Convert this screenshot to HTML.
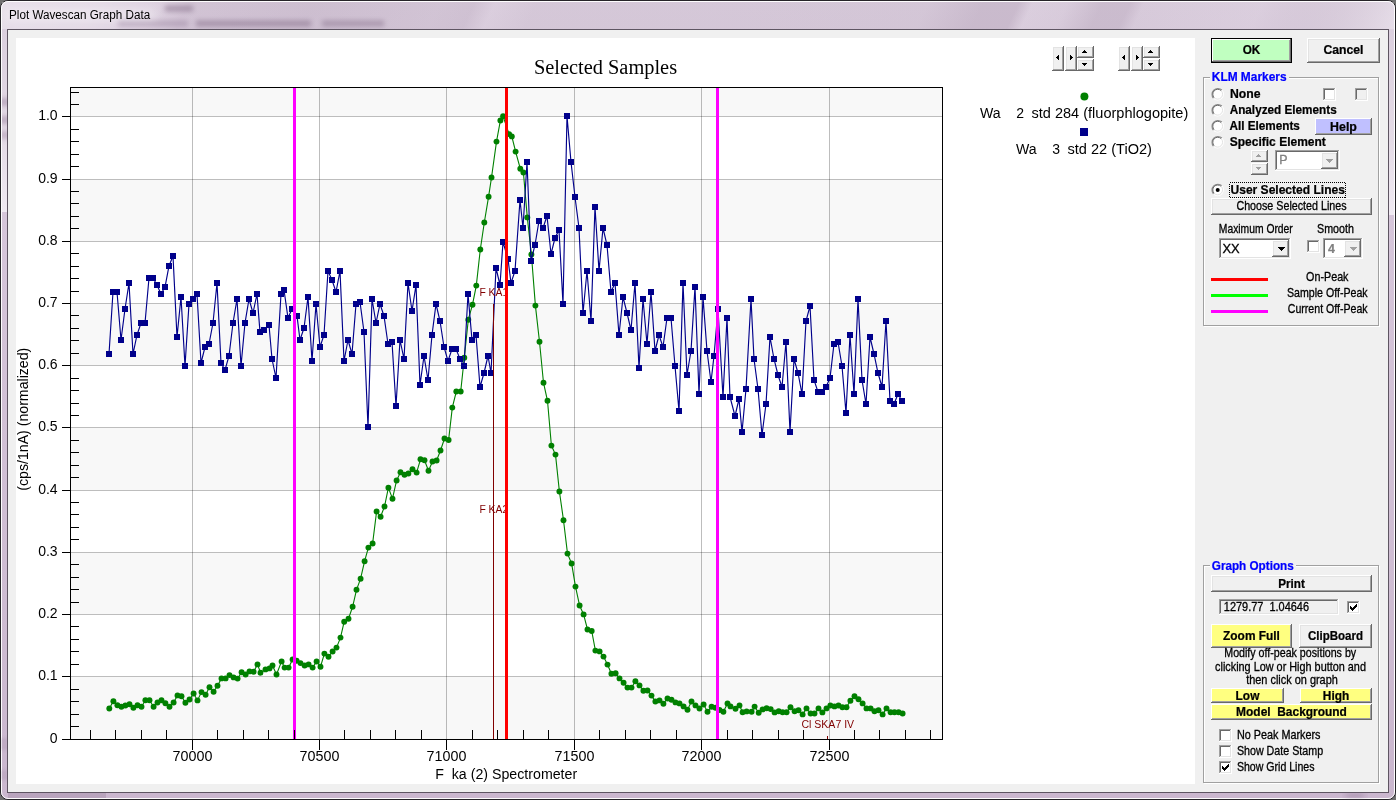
<!DOCTYPE html>
<html><head><meta charset="utf-8"><title>Plot Wavescan Graph Data</title>
<style>
html,body{margin:0;padding:0;background:#6f6f6f;}
body{width:1396px;height:800px;position:relative;overflow:hidden;font-family:"Liberation Sans",sans-serif;}

</style></head><body>
<svg width="1396" height="800" viewBox="0 0 1396 800" style="position:absolute;left:0;top:0" shape-rendering="crispEdges">
<defs>
<linearGradient id="tb" x1="0" y1="0" x2="0" y2="1"><stop offset="0" stop-color="#DDD1E0"/><stop offset="0.3" stop-color="#D6C7DA"/><stop offset="1" stop-color="#CDBAD1"/></linearGradient>
<linearGradient id="tbx" gradientUnits="userSpaceOnUse" x1="0" y1="0" x2="1396" y2="0">
 <stop offset="0" stop-color="#fff" stop-opacity="0.30"/>
 <stop offset="0.065" stop-color="#fff" stop-opacity="0.22"/>
 <stop offset="0.10" stop-color="#fff" stop-opacity="0.05"/>
 <stop offset="0.13" stop-color="#6c4f70" stop-opacity="0.10"/>
 <stop offset="0.22" stop-color="#6c4f70" stop-opacity="0.14"/>
 <stop offset="0.31" stop-color="#6c4f70" stop-opacity="0.10"/>
 <stop offset="0.335" stop-color="#6c4f70" stop-opacity="0.12"/>
 <stop offset="0.35" stop-color="#6c4f70" stop-opacity="0.02"/>
 <stop offset="0.38" stop-color="#6c4f70" stop-opacity="0.07"/>
 <stop offset="0.50" stop-color="#6c4f70" stop-opacity="0.07"/>
 <stop offset="0.66" stop-color="#6c4f70" stop-opacity="0.08"/>
 <stop offset="0.70" stop-color="#6c4f70" stop-opacity="0.17"/>
 <stop offset="0.725" stop-color="#6c4f70" stop-opacity="0.17"/>
 <stop offset="0.735" stop-color="#6c4f70" stop-opacity="0.02"/>
 <stop offset="0.76" stop-color="#6c4f70" stop-opacity="0.04"/>
 <stop offset="0.785" stop-color="#6c4f70" stop-opacity="0.16"/>
 <stop offset="0.805" stop-color="#6c4f70" stop-opacity="0.16"/>
 <stop offset="0.815" stop-color="#6c4f70" stop-opacity="0.05"/>
 <stop offset="0.90" stop-color="#6c4f70" stop-opacity="0.02"/>
 <stop offset="1" stop-color="#fff" stop-opacity="0.25"/></linearGradient>
<linearGradient id="side" gradientUnits="userSpaceOnUse" x1="0" y1="30" x2="0" y2="800"><stop offset="0" stop-color="#D8CADB"/><stop offset="0.24" stop-color="#D6C6DA"/><stop offset="1" stop-color="#CAB7CE"/></linearGradient>
<linearGradient id="sidetop" gradientUnits="userSpaceOnUse" x1="0" y1="30" x2="0" y2="214"><stop offset="0" stop-color="#DBCFDE"/><stop offset="0.6" stop-color="#E4DBE6"/><stop offset="1" stop-color="#F0EAF2"/></linearGradient>
<filter id="blurv" x="-100%" y="-50%" width="300%" height="200%"><feGaussianBlur stdDeviation="0.6 2.5"/></filter>
<filter id="blur3" x="-20%" y="-100%" width="140%" height="300%"><feGaussianBlur stdDeviation="5 3"/></filter>
<filter id="blurg" x="-20%" y="-150%" width="140%" height="400%"><feGaussianBlur stdDeviation="2.5 2"/></filter>
<filter id="blur2" x="-20%" y="-100%" width="140%" height="300%"><feGaussianBlur stdDeviation="3 1.6"/></filter>
<clipPath id="plotclip"><rect x="71" y="88" width="871" height="651"/></clipPath>
</defs>
<rect x="0" y="0" width="1396" height="800" fill="#6f6f6f"/>
<rect x="0.5" y="0.5" width="1395" height="799" rx="7.5" ry="7.5" fill="url(#tb)" stroke="#262428" stroke-width="1" shape-rendering="geometricPrecision"/>
<path d="M2,30 H1394 V792 Q1394,798 1388,798 H8 Q2,798 2,792 Z" fill="url(#side)" shape-rendering="geometricPrecision"/>
<rect x="1389" y="30" width="5" height="185" fill="url(#sidetop)"/>
<rect x="2" y="30" width="5" height="182" fill="url(#sidetop)"/>
<g opacity="0.5" filter="url(#blurv)"><rect x="2" y="98" width="5" height="8" fill="#9c84a0"/><rect x="2" y="116" width="5" height="8" fill="#9c84a0"/><rect x="2" y="131" width="5" height="8" fill="#a890ac"/></g>
<rect x="8" y="793" width="1380" height="5" fill="#CBB7CF"/>
<rect x="8" y="793" width="98" height="5" fill="#B9A4BD"/>
<clipPath id="tbclip"><rect x="2" y="2" width="1392" height="27"/></clipPath>
<g clip-path="url(#tbclip)"><rect x="-40" y="2" width="1480" height="28" fill="url(#tbx)" transform="skewX(-25) translate(8,0)"/></g>
<rect x="1.5" y="1.5" width="1393" height="797" rx="6.5" ry="6.5" fill="none" stroke="#FFFFFF" stroke-opacity="0.95" stroke-width="1" shape-rendering="geometricPrecision"/>
<g filter="url(#blurg)" opacity="0.42"><rect x="165" y="5" width="28" height="7" fill="#7d6581"/><rect x="118" y="20" width="70" height="7" fill="#9b85a0"/><rect x="196" y="20" width="115" height="7" fill="#7d6581"/><rect x="322" y="20" width="62" height="7" fill="#86708a"/></g>
<g opacity="0.45"><rect x="2" y="738" width="5" height="12" fill="#9c84a0" filter="url(#blur2)"/><rect x="2" y="770" width="5" height="10" fill="#9c84a0" filter="url(#blur2)"/><rect x="1346" y="793" width="18" height="5" fill="#9c84a0" filter="url(#blur2)"/></g>
<g filter="url(#blur3)" opacity="0.28"><rect x="6" y="8" width="150" height="14" fill="#fff"/></g>
<g shape-rendering="geometricPrecision">
<text x="9.0" y="19" font-family="Liberation Sans, sans-serif" font-size="12" fill="#000" text-anchor="start" textLength="141.2" lengthAdjust="spacingAndGlyphs" xml:space="preserve" style="white-space:pre" >Plot Wavescan Graph Data</text>
</g>
<rect x="7" y="29" width="1382" height="764" fill="#5E5562" />
<rect x="8" y="30" width="1380" height="762" fill="#F0F0F0" />
<rect x="16" y="38" width="1179" height="746" fill="#FFFFFF" />
<rect x="71" y="88" width="871" height="28" fill="#F8F8F8" />
<rect x="71" y="180" width="871" height="61" fill="#F8F8F8" />
<rect x="71" y="304" width="871" height="61" fill="#F8F8F8" />
<rect x="71" y="428" width="871" height="62" fill="#F8F8F8" />
<rect x="71" y="553" width="871" height="61" fill="#F8F8F8" />
<rect x="71" y="677" width="871" height="62" fill="#F8F8F8" />
<rect x="71" y="116" width="871" height="1" fill="#000" fill-opacity="0.26" />
<rect x="71" y="179" width="871" height="1" fill="#000" fill-opacity="0.26" />
<rect x="71" y="241" width="871" height="1" fill="#000" fill-opacity="0.26" />
<rect x="71" y="303" width="871" height="1" fill="#000" fill-opacity="0.26" />
<rect x="71" y="365" width="871" height="1" fill="#000" fill-opacity="0.26" />
<rect x="71" y="427" width="871" height="1" fill="#000" fill-opacity="0.26" />
<rect x="71" y="490" width="871" height="1" fill="#000" fill-opacity="0.26" />
<rect x="71" y="552" width="871" height="1" fill="#000" fill-opacity="0.26" />
<rect x="71" y="614" width="871" height="1" fill="#000" fill-opacity="0.26" />
<rect x="71" y="676" width="871" height="1" fill="#000" fill-opacity="0.26" />
<rect x="192" y="88" width="1" height="651" fill="#000" fill-opacity="0.26" />
<rect x="319" y="88" width="1" height="651" fill="#000" fill-opacity="0.26" />
<rect x="446" y="88" width="1" height="651" fill="#000" fill-opacity="0.26" />
<rect x="574" y="88" width="1" height="651" fill="#000" fill-opacity="0.26" />
<rect x="701" y="88" width="1" height="651" fill="#000" fill-opacity="0.26" />
<rect x="829" y="88" width="1" height="651" fill="#000" fill-opacity="0.26" />
<g shape-rendering="geometricPrecision" clip-path="url(#plotclip)">
<polyline points="109.3,708.5 113.4,701.2 117.4,705.2 121.4,706.7 125.4,705.5 129.5,704.2 133.4,707.8 137.5,705.2 141.5,706.7 145.4,700.3 149.5,700.3 153.6,706.7 157.5,702.5 161.5,700.3 165.4,703.3 169.5,706.7 173.6,702.5 177.5,695.4 181.5,696.2 185.4,702.7 189.5,699.5 193.6,693.5 197.5,700.4 201.5,692.1 205.6,694.7 209.5,687.2 213.6,691.7 217.5,685.7 221.5,678.4 225.6,678.4 229.5,675.1 233.6,677.4 237.6,678.6 241.6,672.3 245.6,674.5 249.5,671.4 253.6,671.7 257.5,664.4 260.5,672.7 265.5,669.4 269.5,668.4 272.5,665.5 276.5,674.5 281.6,661.4 284.6,667.6 288.6,667.6 292.6,659.5 296.6,660.8 300.5,663.1 304.6,665.5 308.6,664.4 312.6,667.6 316.6,661.5 320.5,666.7 324.4,653.6 328.5,656.7 332.6,651.5 336.5,647.6 340.5,637.6 344.2,621.7 348.5,618.7 352.6,606.8 356.5,589.8 360.6,578.7 364.6,561.2 368.4,547.6 372.6,543.5 376.6,511.5 380.6,516.7 384.5,506.5 388.4,487.7 392.5,498.7 396.6,480.5 400.5,472.3 404.5,474.7 408.4,473.5 412.5,469.3 416.6,472.6 420.5,459.3 424.5,460.3 428.5,470.7 432.5,461.5 436.6,460.5 440.5,450.5 444.5,438.5 448.6,440.0 452.3,407.6 456.3,391.5 460.7,391.5 464.3,357.8 468.3,319.7 472.5,304.7 476.3,285.6 480.3,249.5 484.3,222.5 488.6,196.7 491.5,177.5 496.5,141.6 500.4,120.5 503.1,116.3 509.1,134.1 511.8,136.4 515.6,151.6 520.3,168.7 523.4,172.5 527.3,217.4 531.4,254.5 535.4,305.6 539.5,341.8 543.5,382.7 547.5,400.8 551.4,445.6 555.5,454.6 559.4,491.5 563.5,520.2 567.5,553.6 571.6,563.5 575.5,586.6 579.6,605.5 583.6,614.4 587.5,629.5 591.7,631.0 595.4,650.6 599.6,651.4 603.5,656.6 607.5,664.6 611.4,673.8 615.6,673.3 619.5,678.4 623.6,682.7 627.5,687.6 631.5,687.6 635.4,681.3 639.5,685.4 643.4,690.8 647.5,690.5 651.5,695.6 655.4,701.5 659.5,700.4 663.4,703.7 667.5,698.5 671.5,699.7 675.5,702.4 679.5,703.4 683.6,706.4 687.5,709.7 691.5,701.5 695.5,705.4 699.5,708.5 703.6,704.5 707.5,711.7 711.6,706.7 715.5,707.8 719.5,710.0 723.4,711.8 727.5,703.4 730.5,706.4 735.5,708.7 739.5,705.4 742.6,712.3 746.6,711.4 751.6,711.7 754.6,706.6 758.7,712.7 762.6,709.4 766.6,708.2 770.7,709.1 774.6,712.4 778.7,711.2 782.6,712.3 786.6,712.3 790.5,707.3 794.6,711.2 798.5,710.2 802.6,714.4 806.5,708.4 810.6,713.5 814.5,713.5 818.5,708.4 822.4,712.4 826.5,708.4 830.4,705.5 834.5,706.4 838.5,705.5 842.4,707.3 846.5,707.3 850.4,700.7 854.5,696.2 858.5,699.3 862.6,703.4 866.5,708.4 870.6,708.4 874.5,711.2 878.5,710.3 882.6,714.4 886.5,708.4 890.6,712.3 894.5,712.3 898.6,712.3 902.6,713.5" fill="none" stroke="#008000" stroke-width="1.1"/>
<circle cx="109.3" cy="708.5" r="2.95" fill="#008000"/>
<circle cx="113.4" cy="701.2" r="2.95" fill="#008000"/>
<circle cx="117.4" cy="705.2" r="2.95" fill="#008000"/>
<circle cx="121.4" cy="706.7" r="2.95" fill="#008000"/>
<circle cx="125.4" cy="705.5" r="2.95" fill="#008000"/>
<circle cx="129.5" cy="704.2" r="2.95" fill="#008000"/>
<circle cx="133.4" cy="707.8" r="2.95" fill="#008000"/>
<circle cx="137.5" cy="705.2" r="2.95" fill="#008000"/>
<circle cx="141.5" cy="706.7" r="2.95" fill="#008000"/>
<circle cx="145.4" cy="700.3" r="2.95" fill="#008000"/>
<circle cx="149.5" cy="700.3" r="2.95" fill="#008000"/>
<circle cx="153.6" cy="706.7" r="2.95" fill="#008000"/>
<circle cx="157.5" cy="702.5" r="2.95" fill="#008000"/>
<circle cx="161.5" cy="700.3" r="2.95" fill="#008000"/>
<circle cx="165.4" cy="703.3" r="2.95" fill="#008000"/>
<circle cx="169.5" cy="706.7" r="2.95" fill="#008000"/>
<circle cx="173.6" cy="702.5" r="2.95" fill="#008000"/>
<circle cx="177.5" cy="695.4" r="2.95" fill="#008000"/>
<circle cx="181.5" cy="696.2" r="2.95" fill="#008000"/>
<circle cx="185.4" cy="702.7" r="2.95" fill="#008000"/>
<circle cx="189.5" cy="699.5" r="2.95" fill="#008000"/>
<circle cx="193.6" cy="693.5" r="2.95" fill="#008000"/>
<circle cx="197.5" cy="700.4" r="2.95" fill="#008000"/>
<circle cx="201.5" cy="692.1" r="2.95" fill="#008000"/>
<circle cx="205.6" cy="694.7" r="2.95" fill="#008000"/>
<circle cx="209.5" cy="687.2" r="2.95" fill="#008000"/>
<circle cx="213.6" cy="691.7" r="2.95" fill="#008000"/>
<circle cx="217.5" cy="685.7" r="2.95" fill="#008000"/>
<circle cx="221.5" cy="678.4" r="2.95" fill="#008000"/>
<circle cx="225.6" cy="678.4" r="2.95" fill="#008000"/>
<circle cx="229.5" cy="675.1" r="2.95" fill="#008000"/>
<circle cx="233.6" cy="677.4" r="2.95" fill="#008000"/>
<circle cx="237.6" cy="678.6" r="2.95" fill="#008000"/>
<circle cx="241.6" cy="672.3" r="2.95" fill="#008000"/>
<circle cx="245.6" cy="674.5" r="2.95" fill="#008000"/>
<circle cx="249.5" cy="671.4" r="2.95" fill="#008000"/>
<circle cx="253.6" cy="671.7" r="2.95" fill="#008000"/>
<circle cx="257.5" cy="664.4" r="2.95" fill="#008000"/>
<circle cx="260.5" cy="672.7" r="2.95" fill="#008000"/>
<circle cx="265.5" cy="669.4" r="2.95" fill="#008000"/>
<circle cx="269.5" cy="668.4" r="2.95" fill="#008000"/>
<circle cx="272.5" cy="665.5" r="2.95" fill="#008000"/>
<circle cx="276.5" cy="674.5" r="2.95" fill="#008000"/>
<circle cx="281.6" cy="661.4" r="2.95" fill="#008000"/>
<circle cx="284.6" cy="667.6" r="2.95" fill="#008000"/>
<circle cx="288.6" cy="667.6" r="2.95" fill="#008000"/>
<circle cx="292.6" cy="659.5" r="2.95" fill="#008000"/>
<circle cx="296.6" cy="660.8" r="2.95" fill="#008000"/>
<circle cx="300.5" cy="663.1" r="2.95" fill="#008000"/>
<circle cx="304.6" cy="665.5" r="2.95" fill="#008000"/>
<circle cx="308.6" cy="664.4" r="2.95" fill="#008000"/>
<circle cx="312.6" cy="667.6" r="2.95" fill="#008000"/>
<circle cx="316.6" cy="661.5" r="2.95" fill="#008000"/>
<circle cx="320.5" cy="666.7" r="2.95" fill="#008000"/>
<circle cx="324.4" cy="653.6" r="2.95" fill="#008000"/>
<circle cx="328.5" cy="656.7" r="2.95" fill="#008000"/>
<circle cx="332.6" cy="651.5" r="2.95" fill="#008000"/>
<circle cx="336.5" cy="647.6" r="2.95" fill="#008000"/>
<circle cx="340.5" cy="637.6" r="2.95" fill="#008000"/>
<circle cx="344.2" cy="621.7" r="2.95" fill="#008000"/>
<circle cx="348.5" cy="618.7" r="2.95" fill="#008000"/>
<circle cx="352.6" cy="606.8" r="2.95" fill="#008000"/>
<circle cx="356.5" cy="589.8" r="2.95" fill="#008000"/>
<circle cx="360.6" cy="578.7" r="2.95" fill="#008000"/>
<circle cx="364.6" cy="561.2" r="2.95" fill="#008000"/>
<circle cx="368.4" cy="547.6" r="2.95" fill="#008000"/>
<circle cx="372.6" cy="543.5" r="2.95" fill="#008000"/>
<circle cx="376.6" cy="511.5" r="2.95" fill="#008000"/>
<circle cx="380.6" cy="516.7" r="2.95" fill="#008000"/>
<circle cx="384.5" cy="506.5" r="2.95" fill="#008000"/>
<circle cx="388.4" cy="487.7" r="2.95" fill="#008000"/>
<circle cx="392.5" cy="498.7" r="2.95" fill="#008000"/>
<circle cx="396.6" cy="480.5" r="2.95" fill="#008000"/>
<circle cx="400.5" cy="472.3" r="2.95" fill="#008000"/>
<circle cx="404.5" cy="474.7" r="2.95" fill="#008000"/>
<circle cx="408.4" cy="473.5" r="2.95" fill="#008000"/>
<circle cx="412.5" cy="469.3" r="2.95" fill="#008000"/>
<circle cx="416.6" cy="472.6" r="2.95" fill="#008000"/>
<circle cx="420.5" cy="459.3" r="2.95" fill="#008000"/>
<circle cx="424.5" cy="460.3" r="2.95" fill="#008000"/>
<circle cx="428.5" cy="470.7" r="2.95" fill="#008000"/>
<circle cx="432.5" cy="461.5" r="2.95" fill="#008000"/>
<circle cx="436.6" cy="460.5" r="2.95" fill="#008000"/>
<circle cx="440.5" cy="450.5" r="2.95" fill="#008000"/>
<circle cx="444.5" cy="438.5" r="2.95" fill="#008000"/>
<circle cx="448.6" cy="440.0" r="2.95" fill="#008000"/>
<circle cx="452.3" cy="407.6" r="2.95" fill="#008000"/>
<circle cx="456.3" cy="391.5" r="2.95" fill="#008000"/>
<circle cx="460.7" cy="391.5" r="2.95" fill="#008000"/>
<circle cx="464.3" cy="357.8" r="2.95" fill="#008000"/>
<circle cx="468.3" cy="319.7" r="2.95" fill="#008000"/>
<circle cx="472.5" cy="304.7" r="2.95" fill="#008000"/>
<circle cx="476.3" cy="285.6" r="2.95" fill="#008000"/>
<circle cx="480.3" cy="249.5" r="2.95" fill="#008000"/>
<circle cx="484.3" cy="222.5" r="2.95" fill="#008000"/>
<circle cx="488.6" cy="196.7" r="2.95" fill="#008000"/>
<circle cx="491.5" cy="177.5" r="2.95" fill="#008000"/>
<circle cx="496.5" cy="141.6" r="2.95" fill="#008000"/>
<circle cx="500.4" cy="120.5" r="2.95" fill="#008000"/>
<circle cx="503.1" cy="116.3" r="2.95" fill="#008000"/>
<circle cx="509.1" cy="134.1" r="2.95" fill="#008000"/>
<circle cx="511.8" cy="136.4" r="2.95" fill="#008000"/>
<circle cx="515.6" cy="151.6" r="2.95" fill="#008000"/>
<circle cx="520.3" cy="168.7" r="2.95" fill="#008000"/>
<circle cx="523.4" cy="172.5" r="2.95" fill="#008000"/>
<circle cx="527.3" cy="217.4" r="2.95" fill="#008000"/>
<circle cx="531.4" cy="254.5" r="2.95" fill="#008000"/>
<circle cx="535.4" cy="305.6" r="2.95" fill="#008000"/>
<circle cx="539.5" cy="341.8" r="2.95" fill="#008000"/>
<circle cx="543.5" cy="382.7" r="2.95" fill="#008000"/>
<circle cx="547.5" cy="400.8" r="2.95" fill="#008000"/>
<circle cx="551.4" cy="445.6" r="2.95" fill="#008000"/>
<circle cx="555.5" cy="454.6" r="2.95" fill="#008000"/>
<circle cx="559.4" cy="491.5" r="2.95" fill="#008000"/>
<circle cx="563.5" cy="520.2" r="2.95" fill="#008000"/>
<circle cx="567.5" cy="553.6" r="2.95" fill="#008000"/>
<circle cx="571.6" cy="563.5" r="2.95" fill="#008000"/>
<circle cx="575.5" cy="586.6" r="2.95" fill="#008000"/>
<circle cx="579.6" cy="605.5" r="2.95" fill="#008000"/>
<circle cx="583.6" cy="614.4" r="2.95" fill="#008000"/>
<circle cx="587.5" cy="629.5" r="2.95" fill="#008000"/>
<circle cx="591.7" cy="631.0" r="2.95" fill="#008000"/>
<circle cx="595.4" cy="650.6" r="2.95" fill="#008000"/>
<circle cx="599.6" cy="651.4" r="2.95" fill="#008000"/>
<circle cx="603.5" cy="656.6" r="2.95" fill="#008000"/>
<circle cx="607.5" cy="664.6" r="2.95" fill="#008000"/>
<circle cx="611.4" cy="673.8" r="2.95" fill="#008000"/>
<circle cx="615.6" cy="673.3" r="2.95" fill="#008000"/>
<circle cx="619.5" cy="678.4" r="2.95" fill="#008000"/>
<circle cx="623.6" cy="682.7" r="2.95" fill="#008000"/>
<circle cx="627.5" cy="687.6" r="2.95" fill="#008000"/>
<circle cx="631.5" cy="687.6" r="2.95" fill="#008000"/>
<circle cx="635.4" cy="681.3" r="2.95" fill="#008000"/>
<circle cx="639.5" cy="685.4" r="2.95" fill="#008000"/>
<circle cx="643.4" cy="690.8" r="2.95" fill="#008000"/>
<circle cx="647.5" cy="690.5" r="2.95" fill="#008000"/>
<circle cx="651.5" cy="695.6" r="2.95" fill="#008000"/>
<circle cx="655.4" cy="701.5" r="2.95" fill="#008000"/>
<circle cx="659.5" cy="700.4" r="2.95" fill="#008000"/>
<circle cx="663.4" cy="703.7" r="2.95" fill="#008000"/>
<circle cx="667.5" cy="698.5" r="2.95" fill="#008000"/>
<circle cx="671.5" cy="699.7" r="2.95" fill="#008000"/>
<circle cx="675.5" cy="702.4" r="2.95" fill="#008000"/>
<circle cx="679.5" cy="703.4" r="2.95" fill="#008000"/>
<circle cx="683.6" cy="706.4" r="2.95" fill="#008000"/>
<circle cx="687.5" cy="709.7" r="2.95" fill="#008000"/>
<circle cx="691.5" cy="701.5" r="2.95" fill="#008000"/>
<circle cx="695.5" cy="705.4" r="2.95" fill="#008000"/>
<circle cx="699.5" cy="708.5" r="2.95" fill="#008000"/>
<circle cx="703.6" cy="704.5" r="2.95" fill="#008000"/>
<circle cx="707.5" cy="711.7" r="2.95" fill="#008000"/>
<circle cx="711.6" cy="706.7" r="2.95" fill="#008000"/>
<circle cx="715.5" cy="707.8" r="2.95" fill="#008000"/>
<circle cx="719.5" cy="710.0" r="2.95" fill="#008000"/>
<circle cx="723.4" cy="711.8" r="2.95" fill="#008000"/>
<circle cx="727.5" cy="703.4" r="2.95" fill="#008000"/>
<circle cx="730.5" cy="706.4" r="2.95" fill="#008000"/>
<circle cx="735.5" cy="708.7" r="2.95" fill="#008000"/>
<circle cx="739.5" cy="705.4" r="2.95" fill="#008000"/>
<circle cx="742.6" cy="712.3" r="2.95" fill="#008000"/>
<circle cx="746.6" cy="711.4" r="2.95" fill="#008000"/>
<circle cx="751.6" cy="711.7" r="2.95" fill="#008000"/>
<circle cx="754.6" cy="706.6" r="2.95" fill="#008000"/>
<circle cx="758.7" cy="712.7" r="2.95" fill="#008000"/>
<circle cx="762.6" cy="709.4" r="2.95" fill="#008000"/>
<circle cx="766.6" cy="708.2" r="2.95" fill="#008000"/>
<circle cx="770.7" cy="709.1" r="2.95" fill="#008000"/>
<circle cx="774.6" cy="712.4" r="2.95" fill="#008000"/>
<circle cx="778.7" cy="711.2" r="2.95" fill="#008000"/>
<circle cx="782.6" cy="712.3" r="2.95" fill="#008000"/>
<circle cx="786.6" cy="712.3" r="2.95" fill="#008000"/>
<circle cx="790.5" cy="707.3" r="2.95" fill="#008000"/>
<circle cx="794.6" cy="711.2" r="2.95" fill="#008000"/>
<circle cx="798.5" cy="710.2" r="2.95" fill="#008000"/>
<circle cx="802.6" cy="714.4" r="2.95" fill="#008000"/>
<circle cx="806.5" cy="708.4" r="2.95" fill="#008000"/>
<circle cx="810.6" cy="713.5" r="2.95" fill="#008000"/>
<circle cx="814.5" cy="713.5" r="2.95" fill="#008000"/>
<circle cx="818.5" cy="708.4" r="2.95" fill="#008000"/>
<circle cx="822.4" cy="712.4" r="2.95" fill="#008000"/>
<circle cx="826.5" cy="708.4" r="2.95" fill="#008000"/>
<circle cx="830.4" cy="705.5" r="2.95" fill="#008000"/>
<circle cx="834.5" cy="706.4" r="2.95" fill="#008000"/>
<circle cx="838.5" cy="705.5" r="2.95" fill="#008000"/>
<circle cx="842.4" cy="707.3" r="2.95" fill="#008000"/>
<circle cx="846.5" cy="707.3" r="2.95" fill="#008000"/>
<circle cx="850.4" cy="700.7" r="2.95" fill="#008000"/>
<circle cx="854.5" cy="696.2" r="2.95" fill="#008000"/>
<circle cx="858.5" cy="699.3" r="2.95" fill="#008000"/>
<circle cx="862.6" cy="703.4" r="2.95" fill="#008000"/>
<circle cx="866.5" cy="708.4" r="2.95" fill="#008000"/>
<circle cx="870.6" cy="708.4" r="2.95" fill="#008000"/>
<circle cx="874.5" cy="711.2" r="2.95" fill="#008000"/>
<circle cx="878.5" cy="710.3" r="2.95" fill="#008000"/>
<circle cx="882.6" cy="714.4" r="2.95" fill="#008000"/>
<circle cx="886.5" cy="708.4" r="2.95" fill="#008000"/>
<circle cx="890.6" cy="712.3" r="2.95" fill="#008000"/>
<circle cx="894.5" cy="712.3" r="2.95" fill="#008000"/>
<circle cx="898.6" cy="712.3" r="2.95" fill="#008000"/>
<circle cx="902.6" cy="713.5" r="2.95" fill="#008000"/>
<polyline points="109,354 113,292 117,292 121,340 125,309 129,283 133,354 137,335 141,323 145,323 149,278 153,278 157,285 161,294 165,287 169,266 173,256 177,337 181,297 185,366 189,304 193,299 197,294 201,363 205,347 209,344 213,323 217,283 221,363 225,370 229,356 233,323 237,299 241,366 245,323 249,299 253,313 257,294 260,332 264,330 269,325 272,359 276,378 281,294 284,290 288,318 292,309 297,316 300,340 304,328 308,297 312,361 316,304 320,347 324,335 328,271 332,280 336,292 340,271 344,361 348,340 352,354 356,304 360,302 364,332 368,427 372,299 376,323 380,304 384,316 388,344 392,342 396,406 400,340 404,359 408,283 412,311 416,285 420,385 424,356 428,380 432,335 436,304 440,321 444,347 448,361 452,349 456,349 460,359 464,366 468,294 472,340 476,335 480,387 484,373 488,356 491,373 496,268 500,285 503,242 508,259 511,283 515,271 520,200 523,228 527,162 531,261 535,245 539,221 543,228 547,216 551,254 555,238 559,230 563,304 567,116 571,162 575,197 579,228 583,313 587,271 591,321 595,207 599,271 603,228 607,245 611,292 615,283 619,335 623,297 627,313 631,330 635,283 639,368 643,299 647,344 651,292 655,351 659,335 663,347 667,318 671,318 675,366 679,411 683,283 687,375 691,351 695,287 699,394 703,297 707,351 711,382 714,356 718,309 723,397 727,318 730,397 735,416 739,399 742,432 746,389 751,299 754,359 758,389 762,435 766,404 770,337 774,359 778,375 782,387 786,342 790,432 794,359 798,373 802,394 806,321 810,306 814,380 818,392 822,392 826,387 830,378 834,344 838,342 842,366 846,413 850,335 854,394 858,299 862,380 866,404 870,337 874,354 878,373 882,387 886,321 890,401 894,404 898,394 902,401" fill="none" stroke="#00008B" stroke-width="1.15"/>
<rect x="106" y="351" width="6" height="6" fill="#00008B" shape-rendering="crispEdges"/>
<rect x="110" y="289" width="6" height="6" fill="#00008B" shape-rendering="crispEdges"/>
<rect x="114" y="289" width="6" height="6" fill="#00008B" shape-rendering="crispEdges"/>
<rect x="118" y="337" width="6" height="6" fill="#00008B" shape-rendering="crispEdges"/>
<rect x="122" y="306" width="6" height="6" fill="#00008B" shape-rendering="crispEdges"/>
<rect x="126" y="280" width="6" height="6" fill="#00008B" shape-rendering="crispEdges"/>
<rect x="130" y="351" width="6" height="6" fill="#00008B" shape-rendering="crispEdges"/>
<rect x="134" y="332" width="6" height="6" fill="#00008B" shape-rendering="crispEdges"/>
<rect x="138" y="320" width="6" height="6" fill="#00008B" shape-rendering="crispEdges"/>
<rect x="142" y="320" width="6" height="6" fill="#00008B" shape-rendering="crispEdges"/>
<rect x="146" y="275" width="6" height="6" fill="#00008B" shape-rendering="crispEdges"/>
<rect x="150" y="275" width="6" height="6" fill="#00008B" shape-rendering="crispEdges"/>
<rect x="154" y="282" width="6" height="6" fill="#00008B" shape-rendering="crispEdges"/>
<rect x="158" y="291" width="6" height="6" fill="#00008B" shape-rendering="crispEdges"/>
<rect x="162" y="284" width="6" height="6" fill="#00008B" shape-rendering="crispEdges"/>
<rect x="166" y="263" width="6" height="6" fill="#00008B" shape-rendering="crispEdges"/>
<rect x="170" y="253" width="6" height="6" fill="#00008B" shape-rendering="crispEdges"/>
<rect x="174" y="334" width="6" height="6" fill="#00008B" shape-rendering="crispEdges"/>
<rect x="178" y="294" width="6" height="6" fill="#00008B" shape-rendering="crispEdges"/>
<rect x="182" y="363" width="6" height="6" fill="#00008B" shape-rendering="crispEdges"/>
<rect x="186" y="301" width="6" height="6" fill="#00008B" shape-rendering="crispEdges"/>
<rect x="190" y="296" width="6" height="6" fill="#00008B" shape-rendering="crispEdges"/>
<rect x="194" y="291" width="6" height="6" fill="#00008B" shape-rendering="crispEdges"/>
<rect x="198" y="360" width="6" height="6" fill="#00008B" shape-rendering="crispEdges"/>
<rect x="202" y="344" width="6" height="6" fill="#00008B" shape-rendering="crispEdges"/>
<rect x="206" y="341" width="6" height="6" fill="#00008B" shape-rendering="crispEdges"/>
<rect x="210" y="320" width="6" height="6" fill="#00008B" shape-rendering="crispEdges"/>
<rect x="214" y="280" width="6" height="6" fill="#00008B" shape-rendering="crispEdges"/>
<rect x="218" y="360" width="6" height="6" fill="#00008B" shape-rendering="crispEdges"/>
<rect x="222" y="367" width="6" height="6" fill="#00008B" shape-rendering="crispEdges"/>
<rect x="226" y="353" width="6" height="6" fill="#00008B" shape-rendering="crispEdges"/>
<rect x="230" y="320" width="6" height="6" fill="#00008B" shape-rendering="crispEdges"/>
<rect x="234" y="296" width="6" height="6" fill="#00008B" shape-rendering="crispEdges"/>
<rect x="238" y="363" width="6" height="6" fill="#00008B" shape-rendering="crispEdges"/>
<rect x="242" y="320" width="6" height="6" fill="#00008B" shape-rendering="crispEdges"/>
<rect x="246" y="296" width="6" height="6" fill="#00008B" shape-rendering="crispEdges"/>
<rect x="250" y="310" width="6" height="6" fill="#00008B" shape-rendering="crispEdges"/>
<rect x="254" y="291" width="6" height="6" fill="#00008B" shape-rendering="crispEdges"/>
<rect x="257" y="329" width="6" height="6" fill="#00008B" shape-rendering="crispEdges"/>
<rect x="261" y="327" width="6" height="6" fill="#00008B" shape-rendering="crispEdges"/>
<rect x="266" y="322" width="6" height="6" fill="#00008B" shape-rendering="crispEdges"/>
<rect x="269" y="356" width="6" height="6" fill="#00008B" shape-rendering="crispEdges"/>
<rect x="273" y="375" width="6" height="6" fill="#00008B" shape-rendering="crispEdges"/>
<rect x="278" y="291" width="6" height="6" fill="#00008B" shape-rendering="crispEdges"/>
<rect x="281" y="287" width="6" height="6" fill="#00008B" shape-rendering="crispEdges"/>
<rect x="285" y="315" width="6" height="6" fill="#00008B" shape-rendering="crispEdges"/>
<rect x="289" y="306" width="6" height="6" fill="#00008B" shape-rendering="crispEdges"/>
<rect x="294" y="313" width="6" height="6" fill="#00008B" shape-rendering="crispEdges"/>
<rect x="297" y="337" width="6" height="6" fill="#00008B" shape-rendering="crispEdges"/>
<rect x="301" y="325" width="6" height="6" fill="#00008B" shape-rendering="crispEdges"/>
<rect x="305" y="294" width="6" height="6" fill="#00008B" shape-rendering="crispEdges"/>
<rect x="309" y="358" width="6" height="6" fill="#00008B" shape-rendering="crispEdges"/>
<rect x="313" y="301" width="6" height="6" fill="#00008B" shape-rendering="crispEdges"/>
<rect x="317" y="344" width="6" height="6" fill="#00008B" shape-rendering="crispEdges"/>
<rect x="321" y="332" width="6" height="6" fill="#00008B" shape-rendering="crispEdges"/>
<rect x="325" y="268" width="6" height="6" fill="#00008B" shape-rendering="crispEdges"/>
<rect x="329" y="277" width="6" height="6" fill="#00008B" shape-rendering="crispEdges"/>
<rect x="333" y="289" width="6" height="6" fill="#00008B" shape-rendering="crispEdges"/>
<rect x="337" y="268" width="6" height="6" fill="#00008B" shape-rendering="crispEdges"/>
<rect x="341" y="358" width="6" height="6" fill="#00008B" shape-rendering="crispEdges"/>
<rect x="345" y="337" width="6" height="6" fill="#00008B" shape-rendering="crispEdges"/>
<rect x="349" y="351" width="6" height="6" fill="#00008B" shape-rendering="crispEdges"/>
<rect x="353" y="301" width="6" height="6" fill="#00008B" shape-rendering="crispEdges"/>
<rect x="357" y="299" width="6" height="6" fill="#00008B" shape-rendering="crispEdges"/>
<rect x="361" y="329" width="6" height="6" fill="#00008B" shape-rendering="crispEdges"/>
<rect x="365" y="424" width="6" height="6" fill="#00008B" shape-rendering="crispEdges"/>
<rect x="369" y="296" width="6" height="6" fill="#00008B" shape-rendering="crispEdges"/>
<rect x="373" y="320" width="6" height="6" fill="#00008B" shape-rendering="crispEdges"/>
<rect x="377" y="301" width="6" height="6" fill="#00008B" shape-rendering="crispEdges"/>
<rect x="381" y="313" width="6" height="6" fill="#00008B" shape-rendering="crispEdges"/>
<rect x="385" y="341" width="6" height="6" fill="#00008B" shape-rendering="crispEdges"/>
<rect x="389" y="339" width="6" height="6" fill="#00008B" shape-rendering="crispEdges"/>
<rect x="393" y="403" width="6" height="6" fill="#00008B" shape-rendering="crispEdges"/>
<rect x="397" y="337" width="6" height="6" fill="#00008B" shape-rendering="crispEdges"/>
<rect x="401" y="356" width="6" height="6" fill="#00008B" shape-rendering="crispEdges"/>
<rect x="405" y="280" width="6" height="6" fill="#00008B" shape-rendering="crispEdges"/>
<rect x="409" y="308" width="6" height="6" fill="#00008B" shape-rendering="crispEdges"/>
<rect x="413" y="282" width="6" height="6" fill="#00008B" shape-rendering="crispEdges"/>
<rect x="417" y="382" width="6" height="6" fill="#00008B" shape-rendering="crispEdges"/>
<rect x="421" y="353" width="6" height="6" fill="#00008B" shape-rendering="crispEdges"/>
<rect x="425" y="377" width="6" height="6" fill="#00008B" shape-rendering="crispEdges"/>
<rect x="429" y="332" width="6" height="6" fill="#00008B" shape-rendering="crispEdges"/>
<rect x="433" y="301" width="6" height="6" fill="#00008B" shape-rendering="crispEdges"/>
<rect x="437" y="318" width="6" height="6" fill="#00008B" shape-rendering="crispEdges"/>
<rect x="441" y="344" width="6" height="6" fill="#00008B" shape-rendering="crispEdges"/>
<rect x="445" y="358" width="6" height="6" fill="#00008B" shape-rendering="crispEdges"/>
<rect x="449" y="346" width="6" height="6" fill="#00008B" shape-rendering="crispEdges"/>
<rect x="453" y="346" width="6" height="6" fill="#00008B" shape-rendering="crispEdges"/>
<rect x="457" y="356" width="6" height="6" fill="#00008B" shape-rendering="crispEdges"/>
<rect x="461" y="363" width="6" height="6" fill="#00008B" shape-rendering="crispEdges"/>
<rect x="465" y="291" width="6" height="6" fill="#00008B" shape-rendering="crispEdges"/>
<rect x="469" y="337" width="6" height="6" fill="#00008B" shape-rendering="crispEdges"/>
<rect x="473" y="332" width="6" height="6" fill="#00008B" shape-rendering="crispEdges"/>
<rect x="477" y="384" width="6" height="6" fill="#00008B" shape-rendering="crispEdges"/>
<rect x="481" y="370" width="6" height="6" fill="#00008B" shape-rendering="crispEdges"/>
<rect x="485" y="353" width="6" height="6" fill="#00008B" shape-rendering="crispEdges"/>
<rect x="488" y="370" width="6" height="6" fill="#00008B" shape-rendering="crispEdges"/>
<rect x="493" y="265" width="6" height="6" fill="#00008B" shape-rendering="crispEdges"/>
<rect x="497" y="282" width="6" height="6" fill="#00008B" shape-rendering="crispEdges"/>
<rect x="500" y="239" width="6" height="6" fill="#00008B" shape-rendering="crispEdges"/>
<rect x="505" y="256" width="6" height="6" fill="#00008B" shape-rendering="crispEdges"/>
<rect x="508" y="280" width="6" height="6" fill="#00008B" shape-rendering="crispEdges"/>
<rect x="512" y="268" width="6" height="6" fill="#00008B" shape-rendering="crispEdges"/>
<rect x="517" y="197" width="6" height="6" fill="#00008B" shape-rendering="crispEdges"/>
<rect x="520" y="225" width="6" height="6" fill="#00008B" shape-rendering="crispEdges"/>
<rect x="524" y="159" width="6" height="6" fill="#00008B" shape-rendering="crispEdges"/>
<rect x="528" y="258" width="6" height="6" fill="#00008B" shape-rendering="crispEdges"/>
<rect x="532" y="242" width="6" height="6" fill="#00008B" shape-rendering="crispEdges"/>
<rect x="536" y="218" width="6" height="6" fill="#00008B" shape-rendering="crispEdges"/>
<rect x="540" y="225" width="6" height="6" fill="#00008B" shape-rendering="crispEdges"/>
<rect x="544" y="213" width="6" height="6" fill="#00008B" shape-rendering="crispEdges"/>
<rect x="548" y="251" width="6" height="6" fill="#00008B" shape-rendering="crispEdges"/>
<rect x="552" y="235" width="6" height="6" fill="#00008B" shape-rendering="crispEdges"/>
<rect x="556" y="227" width="6" height="6" fill="#00008B" shape-rendering="crispEdges"/>
<rect x="560" y="301" width="6" height="6" fill="#00008B" shape-rendering="crispEdges"/>
<rect x="564" y="113" width="6" height="6" fill="#00008B" shape-rendering="crispEdges"/>
<rect x="568" y="159" width="6" height="6" fill="#00008B" shape-rendering="crispEdges"/>
<rect x="572" y="194" width="6" height="6" fill="#00008B" shape-rendering="crispEdges"/>
<rect x="576" y="225" width="6" height="6" fill="#00008B" shape-rendering="crispEdges"/>
<rect x="580" y="310" width="6" height="6" fill="#00008B" shape-rendering="crispEdges"/>
<rect x="584" y="268" width="6" height="6" fill="#00008B" shape-rendering="crispEdges"/>
<rect x="588" y="318" width="6" height="6" fill="#00008B" shape-rendering="crispEdges"/>
<rect x="592" y="204" width="6" height="6" fill="#00008B" shape-rendering="crispEdges"/>
<rect x="596" y="268" width="6" height="6" fill="#00008B" shape-rendering="crispEdges"/>
<rect x="600" y="225" width="6" height="6" fill="#00008B" shape-rendering="crispEdges"/>
<rect x="604" y="242" width="6" height="6" fill="#00008B" shape-rendering="crispEdges"/>
<rect x="608" y="289" width="6" height="6" fill="#00008B" shape-rendering="crispEdges"/>
<rect x="612" y="280" width="6" height="6" fill="#00008B" shape-rendering="crispEdges"/>
<rect x="616" y="332" width="6" height="6" fill="#00008B" shape-rendering="crispEdges"/>
<rect x="620" y="294" width="6" height="6" fill="#00008B" shape-rendering="crispEdges"/>
<rect x="624" y="310" width="6" height="6" fill="#00008B" shape-rendering="crispEdges"/>
<rect x="628" y="327" width="6" height="6" fill="#00008B" shape-rendering="crispEdges"/>
<rect x="632" y="280" width="6" height="6" fill="#00008B" shape-rendering="crispEdges"/>
<rect x="636" y="365" width="6" height="6" fill="#00008B" shape-rendering="crispEdges"/>
<rect x="640" y="296" width="6" height="6" fill="#00008B" shape-rendering="crispEdges"/>
<rect x="644" y="341" width="6" height="6" fill="#00008B" shape-rendering="crispEdges"/>
<rect x="648" y="289" width="6" height="6" fill="#00008B" shape-rendering="crispEdges"/>
<rect x="652" y="348" width="6" height="6" fill="#00008B" shape-rendering="crispEdges"/>
<rect x="656" y="332" width="6" height="6" fill="#00008B" shape-rendering="crispEdges"/>
<rect x="660" y="344" width="6" height="6" fill="#00008B" shape-rendering="crispEdges"/>
<rect x="664" y="315" width="6" height="6" fill="#00008B" shape-rendering="crispEdges"/>
<rect x="668" y="315" width="6" height="6" fill="#00008B" shape-rendering="crispEdges"/>
<rect x="672" y="363" width="6" height="6" fill="#00008B" shape-rendering="crispEdges"/>
<rect x="676" y="408" width="6" height="6" fill="#00008B" shape-rendering="crispEdges"/>
<rect x="680" y="280" width="6" height="6" fill="#00008B" shape-rendering="crispEdges"/>
<rect x="684" y="372" width="6" height="6" fill="#00008B" shape-rendering="crispEdges"/>
<rect x="688" y="348" width="6" height="6" fill="#00008B" shape-rendering="crispEdges"/>
<rect x="692" y="284" width="6" height="6" fill="#00008B" shape-rendering="crispEdges"/>
<rect x="696" y="391" width="6" height="6" fill="#00008B" shape-rendering="crispEdges"/>
<rect x="700" y="294" width="6" height="6" fill="#00008B" shape-rendering="crispEdges"/>
<rect x="704" y="348" width="6" height="6" fill="#00008B" shape-rendering="crispEdges"/>
<rect x="708" y="379" width="6" height="6" fill="#00008B" shape-rendering="crispEdges"/>
<rect x="711" y="353" width="6" height="6" fill="#00008B" shape-rendering="crispEdges"/>
<rect x="715" y="306" width="6" height="6" fill="#00008B" shape-rendering="crispEdges"/>
<rect x="720" y="394" width="6" height="6" fill="#00008B" shape-rendering="crispEdges"/>
<rect x="724" y="315" width="6" height="6" fill="#00008B" shape-rendering="crispEdges"/>
<rect x="727" y="394" width="6" height="6" fill="#00008B" shape-rendering="crispEdges"/>
<rect x="732" y="413" width="6" height="6" fill="#00008B" shape-rendering="crispEdges"/>
<rect x="736" y="396" width="6" height="6" fill="#00008B" shape-rendering="crispEdges"/>
<rect x="739" y="429" width="6" height="6" fill="#00008B" shape-rendering="crispEdges"/>
<rect x="743" y="386" width="6" height="6" fill="#00008B" shape-rendering="crispEdges"/>
<rect x="748" y="296" width="6" height="6" fill="#00008B" shape-rendering="crispEdges"/>
<rect x="751" y="356" width="6" height="6" fill="#00008B" shape-rendering="crispEdges"/>
<rect x="755" y="386" width="6" height="6" fill="#00008B" shape-rendering="crispEdges"/>
<rect x="759" y="432" width="6" height="6" fill="#00008B" shape-rendering="crispEdges"/>
<rect x="763" y="401" width="6" height="6" fill="#00008B" shape-rendering="crispEdges"/>
<rect x="767" y="334" width="6" height="6" fill="#00008B" shape-rendering="crispEdges"/>
<rect x="771" y="356" width="6" height="6" fill="#00008B" shape-rendering="crispEdges"/>
<rect x="775" y="372" width="6" height="6" fill="#00008B" shape-rendering="crispEdges"/>
<rect x="779" y="384" width="6" height="6" fill="#00008B" shape-rendering="crispEdges"/>
<rect x="783" y="339" width="6" height="6" fill="#00008B" shape-rendering="crispEdges"/>
<rect x="787" y="429" width="6" height="6" fill="#00008B" shape-rendering="crispEdges"/>
<rect x="791" y="356" width="6" height="6" fill="#00008B" shape-rendering="crispEdges"/>
<rect x="795" y="370" width="6" height="6" fill="#00008B" shape-rendering="crispEdges"/>
<rect x="799" y="391" width="6" height="6" fill="#00008B" shape-rendering="crispEdges"/>
<rect x="803" y="318" width="6" height="6" fill="#00008B" shape-rendering="crispEdges"/>
<rect x="807" y="303" width="6" height="6" fill="#00008B" shape-rendering="crispEdges"/>
<rect x="811" y="377" width="6" height="6" fill="#00008B" shape-rendering="crispEdges"/>
<rect x="815" y="389" width="6" height="6" fill="#00008B" shape-rendering="crispEdges"/>
<rect x="819" y="389" width="6" height="6" fill="#00008B" shape-rendering="crispEdges"/>
<rect x="823" y="384" width="6" height="6" fill="#00008B" shape-rendering="crispEdges"/>
<rect x="827" y="375" width="6" height="6" fill="#00008B" shape-rendering="crispEdges"/>
<rect x="831" y="341" width="6" height="6" fill="#00008B" shape-rendering="crispEdges"/>
<rect x="835" y="339" width="6" height="6" fill="#00008B" shape-rendering="crispEdges"/>
<rect x="839" y="363" width="6" height="6" fill="#00008B" shape-rendering="crispEdges"/>
<rect x="843" y="410" width="6" height="6" fill="#00008B" shape-rendering="crispEdges"/>
<rect x="847" y="332" width="6" height="6" fill="#00008B" shape-rendering="crispEdges"/>
<rect x="851" y="391" width="6" height="6" fill="#00008B" shape-rendering="crispEdges"/>
<rect x="855" y="296" width="6" height="6" fill="#00008B" shape-rendering="crispEdges"/>
<rect x="859" y="377" width="6" height="6" fill="#00008B" shape-rendering="crispEdges"/>
<rect x="863" y="401" width="6" height="6" fill="#00008B" shape-rendering="crispEdges"/>
<rect x="867" y="334" width="6" height="6" fill="#00008B" shape-rendering="crispEdges"/>
<rect x="871" y="351" width="6" height="6" fill="#00008B" shape-rendering="crispEdges"/>
<rect x="875" y="370" width="6" height="6" fill="#00008B" shape-rendering="crispEdges"/>
<rect x="879" y="384" width="6" height="6" fill="#00008B" shape-rendering="crispEdges"/>
<rect x="883" y="318" width="6" height="6" fill="#00008B" shape-rendering="crispEdges"/>
<rect x="887" y="398" width="6" height="6" fill="#00008B" shape-rendering="crispEdges"/>
<rect x="891" y="401" width="6" height="6" fill="#00008B" shape-rendering="crispEdges"/>
<rect x="895" y="391" width="6" height="6" fill="#00008B" shape-rendering="crispEdges"/>
<rect x="899" y="398" width="6" height="6" fill="#00008B" shape-rendering="crispEdges"/>
</g>
<rect x="493" y="304" width="1" height="435" fill="#800000" />
<rect x="827" y="736" width="1" height="3" fill="#800000" />
<g shape-rendering="geometricPrecision">
<text x="493.8" y="296.2" font-family="Liberation Sans, sans-serif" font-size="10" fill="#800000" text-anchor="middle" textLength="28.8" lengthAdjust="spacingAndGlyphs" xml:space="preserve" style="white-space:pre" >F KA1</text>
<text x="493.8" y="513.4" font-family="Liberation Sans, sans-serif" font-size="10" fill="#800000" text-anchor="middle" textLength="28.8" lengthAdjust="spacingAndGlyphs" xml:space="preserve" style="white-space:pre" >F KA2</text>
<text x="827.8" y="728.2" font-family="Liberation Sans, sans-serif" font-size="10" fill="#800000" text-anchor="middle" textLength="52.7" lengthAdjust="spacingAndGlyphs" xml:space="preserve" style="white-space:pre" >Cl SKA7 IV</text>
</g>
<rect x="293" y="88" width="3" height="651" fill="#FF00FF" />
<rect x="716" y="88" width="3" height="651" fill="#FF00FF" />
<rect x="505" y="88" width="3" height="651" fill="#FF0000" />
<rect x="70" y="87" width="873" height="1" fill="#000" />
<rect x="70" y="739" width="873" height="1" fill="#000" />
<rect x="70" y="87" width="1" height="653" fill="#000" />
<rect x="942" y="87" width="1" height="653" fill="#000" />
<rect x="62" y="739" width="8" height="1" fill="#000" />
<rect x="71" y="726" width="8" height="1" fill="#000" />
<rect x="71" y="714" width="8" height="1" fill="#000" />
<rect x="71" y="701" width="8" height="1" fill="#000" />
<rect x="71" y="689" width="8" height="1" fill="#000" />
<rect x="62" y="676" width="8" height="1" fill="#000" />
<rect x="71" y="664" width="8" height="1" fill="#000" />
<rect x="71" y="651" width="8" height="1" fill="#000" />
<rect x="71" y="639" width="8" height="1" fill="#000" />
<rect x="71" y="626" width="8" height="1" fill="#000" />
<rect x="62" y="614" width="8" height="1" fill="#000" />
<rect x="71" y="602" width="8" height="1" fill="#000" />
<rect x="71" y="589" width="8" height="1" fill="#000" />
<rect x="71" y="577" width="8" height="1" fill="#000" />
<rect x="71" y="564" width="8" height="1" fill="#000" />
<rect x="62" y="552" width="8" height="1" fill="#000" />
<rect x="71" y="539" width="8" height="1" fill="#000" />
<rect x="71" y="527" width="8" height="1" fill="#000" />
<rect x="71" y="514" width="8" height="1" fill="#000" />
<rect x="71" y="502" width="8" height="1" fill="#000" />
<rect x="62" y="490" width="8" height="1" fill="#000" />
<rect x="71" y="477" width="8" height="1" fill="#000" />
<rect x="71" y="465" width="8" height="1" fill="#000" />
<rect x="71" y="452" width="8" height="1" fill="#000" />
<rect x="71" y="440" width="8" height="1" fill="#000" />
<rect x="62" y="427" width="8" height="1" fill="#000" />
<rect x="71" y="415" width="8" height="1" fill="#000" />
<rect x="71" y="403" width="8" height="1" fill="#000" />
<rect x="71" y="390" width="8" height="1" fill="#000" />
<rect x="71" y="378" width="8" height="1" fill="#000" />
<rect x="62" y="365" width="8" height="1" fill="#000" />
<rect x="71" y="353" width="8" height="1" fill="#000" />
<rect x="71" y="340" width="8" height="1" fill="#000" />
<rect x="71" y="328" width="8" height="1" fill="#000" />
<rect x="71" y="315" width="8" height="1" fill="#000" />
<rect x="62" y="303" width="8" height="1" fill="#000" />
<rect x="71" y="291" width="8" height="1" fill="#000" />
<rect x="71" y="278" width="8" height="1" fill="#000" />
<rect x="71" y="266" width="8" height="1" fill="#000" />
<rect x="71" y="253" width="8" height="1" fill="#000" />
<rect x="62" y="241" width="8" height="1" fill="#000" />
<rect x="71" y="228" width="8" height="1" fill="#000" />
<rect x="71" y="216" width="8" height="1" fill="#000" />
<rect x="71" y="203" width="8" height="1" fill="#000" />
<rect x="71" y="191" width="8" height="1" fill="#000" />
<rect x="62" y="179" width="8" height="1" fill="#000" />
<rect x="71" y="166" width="8" height="1" fill="#000" />
<rect x="71" y="154" width="8" height="1" fill="#000" />
<rect x="71" y="141" width="8" height="1" fill="#000" />
<rect x="71" y="129" width="8" height="1" fill="#000" />
<rect x="62" y="116" width="8" height="1" fill="#000" />
<rect x="71" y="104" width="8" height="1" fill="#000" />
<rect x="71" y="92" width="8" height="1" fill="#000" />
<rect x="90" y="730" width="1" height="9" fill="#000" />
<rect x="115" y="730" width="1" height="9" fill="#000" />
<rect x="141" y="730" width="1" height="9" fill="#000" />
<rect x="166" y="730" width="1" height="9" fill="#000" />
<rect x="192" y="740" width="1" height="10" fill="#000" />
<rect x="217" y="730" width="1" height="9" fill="#000" />
<rect x="243" y="730" width="1" height="9" fill="#000" />
<rect x="268" y="730" width="1" height="9" fill="#000" />
<rect x="294" y="730" width="1" height="9" fill="#000" />
<rect x="319" y="740" width="1" height="10" fill="#000" />
<rect x="344" y="730" width="1" height="9" fill="#000" />
<rect x="370" y="730" width="1" height="9" fill="#000" />
<rect x="395" y="730" width="1" height="9" fill="#000" />
<rect x="421" y="730" width="1" height="9" fill="#000" />
<rect x="446" y="740" width="1" height="10" fill="#000" />
<rect x="472" y="730" width="1" height="9" fill="#000" />
<rect x="497" y="730" width="1" height="9" fill="#000" />
<rect x="523" y="730" width="1" height="9" fill="#000" />
<rect x="548" y="730" width="1" height="9" fill="#000" />
<rect x="574" y="740" width="1" height="10" fill="#000" />
<rect x="599" y="730" width="1" height="9" fill="#000" />
<rect x="625" y="730" width="1" height="9" fill="#000" />
<rect x="650" y="730" width="1" height="9" fill="#000" />
<rect x="676" y="730" width="1" height="9" fill="#000" />
<rect x="701" y="740" width="1" height="10" fill="#000" />
<rect x="727" y="730" width="1" height="9" fill="#000" />
<rect x="752" y="730" width="1" height="9" fill="#000" />
<rect x="778" y="730" width="1" height="9" fill="#000" />
<rect x="803" y="730" width="1" height="9" fill="#000" />
<rect x="829" y="740" width="1" height="10" fill="#000" />
<rect x="854" y="730" width="1" height="9" fill="#000" />
<rect x="879" y="730" width="1" height="9" fill="#000" />
<rect x="905" y="730" width="1" height="9" fill="#000" />
<rect x="930" y="730" width="1" height="9" fill="#000" />
<g shape-rendering="geometricPrecision">
<text x="57.6" y="119.9" font-family="Liberation Sans, sans-serif" font-size="14" fill="#000" text-anchor="end" xml:space="preserve" style="white-space:pre" >1.0</text>
<text x="57.6" y="182.9" font-family="Liberation Sans, sans-serif" font-size="14" fill="#000" text-anchor="end" xml:space="preserve" style="white-space:pre" >0.9</text>
<text x="57.6" y="244.9" font-family="Liberation Sans, sans-serif" font-size="14" fill="#000" text-anchor="end" xml:space="preserve" style="white-space:pre" >0.8</text>
<text x="57.6" y="306.9" font-family="Liberation Sans, sans-serif" font-size="14" fill="#000" text-anchor="end" xml:space="preserve" style="white-space:pre" >0.7</text>
<text x="57.6" y="368.9" font-family="Liberation Sans, sans-serif" font-size="14" fill="#000" text-anchor="end" xml:space="preserve" style="white-space:pre" >0.6</text>
<text x="57.6" y="430.9" font-family="Liberation Sans, sans-serif" font-size="14" fill="#000" text-anchor="end" xml:space="preserve" style="white-space:pre" >0.5</text>
<text x="57.6" y="493.9" font-family="Liberation Sans, sans-serif" font-size="14" fill="#000" text-anchor="end" xml:space="preserve" style="white-space:pre" >0.4</text>
<text x="57.6" y="555.9" font-family="Liberation Sans, sans-serif" font-size="14" fill="#000" text-anchor="end" xml:space="preserve" style="white-space:pre" >0.3</text>
<text x="57.6" y="617.9" font-family="Liberation Sans, sans-serif" font-size="14" fill="#000" text-anchor="end" xml:space="preserve" style="white-space:pre" >0.2</text>
<text x="57.6" y="679.9" font-family="Liberation Sans, sans-serif" font-size="14" fill="#000" text-anchor="end" xml:space="preserve" style="white-space:pre" >0.1</text>
<text x="57.6" y="742.9" font-family="Liberation Sans, sans-serif" font-size="14" fill="#000" text-anchor="end" xml:space="preserve" style="white-space:pre" >0</text>
<text x="192.5" y="760.8" font-family="Liberation Sans, sans-serif" font-size="14" fill="#000" text-anchor="middle" textLength="39.8" lengthAdjust="spacingAndGlyphs" xml:space="preserve" style="white-space:pre" >70000</text>
<text x="319.5" y="760.8" font-family="Liberation Sans, sans-serif" font-size="14" fill="#000" text-anchor="middle" textLength="39.8" lengthAdjust="spacingAndGlyphs" xml:space="preserve" style="white-space:pre" >70500</text>
<text x="446.5" y="760.8" font-family="Liberation Sans, sans-serif" font-size="14" fill="#000" text-anchor="middle" textLength="39.8" lengthAdjust="spacingAndGlyphs" xml:space="preserve" style="white-space:pre" >71000</text>
<text x="574.5" y="760.8" font-family="Liberation Sans, sans-serif" font-size="14" fill="#000" text-anchor="middle" textLength="39.8" lengthAdjust="spacingAndGlyphs" xml:space="preserve" style="white-space:pre" >71500</text>
<text x="701.5" y="760.8" font-family="Liberation Sans, sans-serif" font-size="14" fill="#000" text-anchor="middle" textLength="39.8" lengthAdjust="spacingAndGlyphs" xml:space="preserve" style="white-space:pre" >72000</text>
<text x="829.5" y="760.8" font-family="Liberation Sans, sans-serif" font-size="14" fill="#000" text-anchor="middle" textLength="39.8" lengthAdjust="spacingAndGlyphs" xml:space="preserve" style="white-space:pre" >72500</text>
<text x="506.2" y="778.5" font-family="Liberation Sans, sans-serif" font-size="14" fill="#000" text-anchor="middle" textLength="142.0" lengthAdjust="spacingAndGlyphs" xml:space="preserve" style="white-space:pre" >F  ka (2) Spectrometer</text>
<text transform="translate(27.8,419.2) rotate(-90)" font-family="Liberation Sans, sans-serif" font-size="14" text-anchor="middle" textLength="143" lengthAdjust="spacingAndGlyphs">(cps/1nA) (normalized)</text>
<text x="605.5" y="73.8" font-family="Liberation Serif, sans-serif" font-size="20" fill="#000" text-anchor="middle" textLength="143.2" lengthAdjust="spacingAndGlyphs" xml:space="preserve" style="white-space:pre" >Selected Samples</text>
<circle cx="1084.4" cy="96.5" r="4" fill="#008000"/>
<rect x="1080" y="128" width="8" height="8" fill="#00008B"/>
<text x="979.9" y="117.8" font-family="Liberation Sans, sans-serif" font-size="14" fill="#000" text-anchor="start" textLength="20.6" lengthAdjust="spacingAndGlyphs" xml:space="preserve" style="white-space:pre" >Wa</text>
<text x="1016.2" y="117.8" font-family="Liberation Sans, sans-serif" font-size="14" fill="#000" text-anchor="start" xml:space="preserve" style="white-space:pre" >2</text>
<text x="1031.5" y="117.8" font-family="Liberation Sans, sans-serif" font-size="14" fill="#000" text-anchor="start" textLength="156.8" lengthAdjust="spacingAndGlyphs" xml:space="preserve" style="white-space:pre" >std 284 (fluorphlogopite)</text>
<text x="1016.0" y="153.8" font-family="Liberation Sans, sans-serif" font-size="14" fill="#000" text-anchor="start" textLength="20.6" lengthAdjust="spacingAndGlyphs" xml:space="preserve" style="white-space:pre" >Wa</text>
<text x="1052.3" y="153.8" font-family="Liberation Sans, sans-serif" font-size="14" fill="#000" text-anchor="start" xml:space="preserve" style="white-space:pre" >3</text>
<text x="1067.5" y="153.8" font-family="Liberation Sans, sans-serif" font-size="14" fill="#000" text-anchor="start" textLength="84.4" lengthAdjust="spacingAndGlyphs" xml:space="preserve" style="white-space:pre" >std 22 (TiO2)</text>
</g>
<rect x="1052" y="46" width="12" height="25" fill="#F0F0F0" />
<rect x="1052" y="46" width="12" height="1" fill="#FFFFFF" />
<rect x="1052" y="46" width="1" height="25" fill="#FFFFFF" />
<rect x="1052" y="70" width="12" height="1" fill="#696969" />
<rect x="1063" y="46" width="1" height="25" fill="#696969" />
<rect x="1053" y="47" width="10" height="1" fill="#E3E3E3" />
<rect x="1053" y="47" width="1" height="23" fill="#E3E3E3" />
<rect x="1053" y="69" width="10" height="1" fill="#A0A0A0" />
<rect x="1062" y="47" width="1" height="23" fill="#A0A0A0" />
<rect x="1065" y="46" width="12" height="25" fill="#F0F0F0" />
<rect x="1065" y="46" width="12" height="1" fill="#FFFFFF" />
<rect x="1065" y="46" width="1" height="25" fill="#FFFFFF" />
<rect x="1065" y="70" width="12" height="1" fill="#696969" />
<rect x="1076" y="46" width="1" height="25" fill="#696969" />
<rect x="1066" y="47" width="10" height="1" fill="#E3E3E3" />
<rect x="1066" y="47" width="1" height="23" fill="#E3E3E3" />
<rect x="1066" y="69" width="10" height="1" fill="#A0A0A0" />
<rect x="1075" y="47" width="1" height="23" fill="#A0A0A0" />
<rect x="1077" y="46" width="17" height="12" fill="#F0F0F0" />
<rect x="1077" y="46" width="17" height="1" fill="#FFFFFF" />
<rect x="1077" y="46" width="1" height="12" fill="#FFFFFF" />
<rect x="1077" y="57" width="17" height="1" fill="#696969" />
<rect x="1093" y="46" width="1" height="12" fill="#696969" />
<rect x="1078" y="47" width="15" height="1" fill="#E3E3E3" />
<rect x="1078" y="47" width="1" height="10" fill="#E3E3E3" />
<rect x="1078" y="56" width="15" height="1" fill="#A0A0A0" />
<rect x="1092" y="47" width="1" height="10" fill="#A0A0A0" />
<rect x="1077" y="59" width="17" height="12" fill="#F0F0F0" />
<rect x="1077" y="59" width="17" height="1" fill="#FFFFFF" />
<rect x="1077" y="59" width="1" height="12" fill="#FFFFFF" />
<rect x="1077" y="70" width="17" height="1" fill="#696969" />
<rect x="1093" y="59" width="1" height="12" fill="#696969" />
<rect x="1078" y="60" width="15" height="1" fill="#E3E3E3" />
<rect x="1078" y="60" width="1" height="10" fill="#E3E3E3" />
<rect x="1078" y="69" width="15" height="1" fill="#A0A0A0" />
<rect x="1092" y="60" width="1" height="10" fill="#A0A0A0" />
<rect x="1056" y="57" width="1" height="1" fill="#000" />
<rect x="1057" y="56" width="1" height="3" fill="#000" />
<rect x="1058" y="55" width="1" height="5" fill="#000" />
<rect x="1070" y="55" width="1" height="5" fill="#000" />
<rect x="1071" y="56" width="1" height="3" fill="#000" />
<rect x="1072" y="57" width="1" height="1" fill="#000" />
<rect x="1084" y="50" width="1" height="1" fill="#000" />
<rect x="1083" y="51" width="3" height="1" fill="#000" />
<rect x="1082" y="52" width="5" height="1" fill="#000" />
<rect x="1082" y="63" width="5" height="1" fill="#000" />
<rect x="1083" y="64" width="3" height="1" fill="#000" />
<rect x="1084" y="65" width="1" height="1" fill="#000" />
<rect x="1118" y="46" width="12" height="25" fill="#F0F0F0" />
<rect x="1118" y="46" width="12" height="1" fill="#FFFFFF" />
<rect x="1118" y="46" width="1" height="25" fill="#FFFFFF" />
<rect x="1118" y="70" width="12" height="1" fill="#696969" />
<rect x="1129" y="46" width="1" height="25" fill="#696969" />
<rect x="1119" y="47" width="10" height="1" fill="#E3E3E3" />
<rect x="1119" y="47" width="1" height="23" fill="#E3E3E3" />
<rect x="1119" y="69" width="10" height="1" fill="#A0A0A0" />
<rect x="1128" y="47" width="1" height="23" fill="#A0A0A0" />
<rect x="1131" y="46" width="12" height="25" fill="#F0F0F0" />
<rect x="1131" y="46" width="12" height="1" fill="#FFFFFF" />
<rect x="1131" y="46" width="1" height="25" fill="#FFFFFF" />
<rect x="1131" y="70" width="12" height="1" fill="#696969" />
<rect x="1142" y="46" width="1" height="25" fill="#696969" />
<rect x="1132" y="47" width="10" height="1" fill="#E3E3E3" />
<rect x="1132" y="47" width="1" height="23" fill="#E3E3E3" />
<rect x="1132" y="69" width="10" height="1" fill="#A0A0A0" />
<rect x="1141" y="47" width="1" height="23" fill="#A0A0A0" />
<rect x="1143" y="46" width="17" height="12" fill="#F0F0F0" />
<rect x="1143" y="46" width="17" height="1" fill="#FFFFFF" />
<rect x="1143" y="46" width="1" height="12" fill="#FFFFFF" />
<rect x="1143" y="57" width="17" height="1" fill="#696969" />
<rect x="1159" y="46" width="1" height="12" fill="#696969" />
<rect x="1144" y="47" width="15" height="1" fill="#E3E3E3" />
<rect x="1144" y="47" width="1" height="10" fill="#E3E3E3" />
<rect x="1144" y="56" width="15" height="1" fill="#A0A0A0" />
<rect x="1158" y="47" width="1" height="10" fill="#A0A0A0" />
<rect x="1143" y="59" width="17" height="12" fill="#F0F0F0" />
<rect x="1143" y="59" width="17" height="1" fill="#FFFFFF" />
<rect x="1143" y="59" width="1" height="12" fill="#FFFFFF" />
<rect x="1143" y="70" width="17" height="1" fill="#696969" />
<rect x="1159" y="59" width="1" height="12" fill="#696969" />
<rect x="1144" y="60" width="15" height="1" fill="#E3E3E3" />
<rect x="1144" y="60" width="1" height="10" fill="#E3E3E3" />
<rect x="1144" y="69" width="15" height="1" fill="#A0A0A0" />
<rect x="1158" y="60" width="1" height="10" fill="#A0A0A0" />
<rect x="1122" y="57" width="1" height="1" fill="#000" />
<rect x="1123" y="56" width="1" height="3" fill="#000" />
<rect x="1124" y="55" width="1" height="5" fill="#000" />
<rect x="1136" y="55" width="1" height="5" fill="#000" />
<rect x="1137" y="56" width="1" height="3" fill="#000" />
<rect x="1138" y="57" width="1" height="1" fill="#000" />
<rect x="1150" y="50" width="1" height="1" fill="#000" />
<rect x="1149" y="51" width="3" height="1" fill="#000" />
<rect x="1148" y="52" width="5" height="1" fill="#000" />
<rect x="1148" y="63" width="5" height="1" fill="#000" />
<rect x="1149" y="64" width="3" height="1" fill="#000" />
<rect x="1150" y="65" width="1" height="1" fill="#000" />
<g shape-rendering="crispEdges">
<rect x="1211" y="38" width="81" height="25" fill="#000" />
<rect x="1212" y="39" width="79" height="23" fill="#C0FFC0" />
<rect x="1212" y="39" width="79" height="1" fill="#FFFFFF" />
<rect x="1212" y="39" width="1" height="23" fill="#FFFFFF" />
<rect x="1212" y="61" width="79" height="1" fill="#696969" />
<rect x="1290" y="39" width="1" height="23" fill="#696969" />
<rect x="1213" y="40" width="77" height="1" fill="#C0FFC0" />
<rect x="1213" y="40" width="1" height="21" fill="#C0FFC0" />
<rect x="1213" y="60" width="77" height="1" fill="#A0A0A0" />
<rect x="1289" y="40" width="1" height="21" fill="#A0A0A0" />
<text x="1251.5" y="54.4" font-family="Liberation Sans, sans-serif" font-size="12.4" font-weight="bold" fill="#000" text-anchor="middle" textLength="17.6" lengthAdjust="spacingAndGlyphs" xml:space="preserve" style="white-space:pre" stroke="#000" stroke-width="0.24">OK</text>
<rect x="1307" y="38" width="73" height="25" fill="#F0F0F0" />
<rect x="1307" y="38" width="73" height="1" fill="#FFFFFF" />
<rect x="1307" y="38" width="1" height="25" fill="#FFFFFF" />
<rect x="1307" y="62" width="73" height="1" fill="#696969" />
<rect x="1379" y="38" width="1" height="25" fill="#696969" />
<rect x="1308" y="39" width="71" height="1" fill="#E3E3E3" />
<rect x="1308" y="39" width="1" height="23" fill="#E3E3E3" />
<rect x="1308" y="61" width="71" height="1" fill="#A0A0A0" />
<rect x="1378" y="39" width="1" height="23" fill="#A0A0A0" />
<text x="1343.5" y="54.0" font-family="Liberation Sans, sans-serif" font-size="12.4" font-weight="bold" fill="#000" text-anchor="middle" textLength="40.0" lengthAdjust="spacingAndGlyphs" xml:space="preserve" style="white-space:pre" stroke="#000" stroke-width="0.24">Cancel</text>
<rect x="1204" y="78" width="176" height="1" fill="#FFFFFF" />
<rect x="1204" y="78" width="1" height="249" fill="#FFFFFF" />
<rect x="1204" y="326" width="176" height="1" fill="#FFFFFF" />
<rect x="1379" y="78" width="1" height="249" fill="#FFFFFF" />
<rect x="1203" y="77" width="176" height="1" fill="#A0A0A0" />
<rect x="1203" y="77" width="1" height="249" fill="#A0A0A0" />
<rect x="1203" y="325" width="176" height="1" fill="#A0A0A0" />
<rect x="1378" y="77" width="1" height="249" fill="#A0A0A0" />
<rect x="1209.5" y="75" width="79.5" height="5" fill="#F0F0F0" />
<text x="1211.8" y="81.3" font-family="Liberation Sans, sans-serif" font-size="12.4" font-weight="bold" fill="#0000FF" text-anchor="start" textLength="74.7" lengthAdjust="spacingAndGlyphs" xml:space="preserve" style="white-space:pre" stroke="#0000FF" stroke-width="0.24">KLM Markers</text>
<g transform="translate(1217.7,94.2)" shape-rendering="geometricPrecision">
<circle r="5.5" fill="#fff"/>
<path d="M-4.2,4.2 A5.95,5.95 0 0 1 4.2,-4.2" fill="none" stroke="#8c8c8c" stroke-width="1.1"/>
<path d="M-3.5,3.5 A4.95,4.95 0 0 1 3.5,-3.5" fill="none" stroke="#696969" stroke-width="1"/>
<path d="M-4.2,4.2 A5.95,5.95 0 0 0 4.2,-4.2" fill="none" stroke="#fff" stroke-width="1.1"/>
<path d="M-3.5,3.5 A4.95,4.95 0 0 0 3.5,-3.5" fill="none" stroke="#E3E3E3" stroke-width="1"/>
</g>
<g transform="translate(1217.7,110.2)" shape-rendering="geometricPrecision">
<circle r="5.5" fill="#fff"/>
<path d="M-4.2,4.2 A5.95,5.95 0 0 1 4.2,-4.2" fill="none" stroke="#8c8c8c" stroke-width="1.1"/>
<path d="M-3.5,3.5 A4.95,4.95 0 0 1 3.5,-3.5" fill="none" stroke="#696969" stroke-width="1"/>
<path d="M-4.2,4.2 A5.95,5.95 0 0 0 4.2,-4.2" fill="none" stroke="#fff" stroke-width="1.1"/>
<path d="M-3.5,3.5 A4.95,4.95 0 0 0 3.5,-3.5" fill="none" stroke="#E3E3E3" stroke-width="1"/>
</g>
<g transform="translate(1217.7,126.2)" shape-rendering="geometricPrecision">
<circle r="5.5" fill="#fff"/>
<path d="M-4.2,4.2 A5.95,5.95 0 0 1 4.2,-4.2" fill="none" stroke="#8c8c8c" stroke-width="1.1"/>
<path d="M-3.5,3.5 A4.95,4.95 0 0 1 3.5,-3.5" fill="none" stroke="#696969" stroke-width="1"/>
<path d="M-4.2,4.2 A5.95,5.95 0 0 0 4.2,-4.2" fill="none" stroke="#fff" stroke-width="1.1"/>
<path d="M-3.5,3.5 A4.95,4.95 0 0 0 3.5,-3.5" fill="none" stroke="#E3E3E3" stroke-width="1"/>
</g>
<g transform="translate(1217.7,142.2)" shape-rendering="geometricPrecision">
<circle r="5.5" fill="#fff"/>
<path d="M-4.2,4.2 A5.95,5.95 0 0 1 4.2,-4.2" fill="none" stroke="#8c8c8c" stroke-width="1.1"/>
<path d="M-3.5,3.5 A4.95,4.95 0 0 1 3.5,-3.5" fill="none" stroke="#696969" stroke-width="1"/>
<path d="M-4.2,4.2 A5.95,5.95 0 0 0 4.2,-4.2" fill="none" stroke="#fff" stroke-width="1.1"/>
<path d="M-3.5,3.5 A4.95,4.95 0 0 0 3.5,-3.5" fill="none" stroke="#E3E3E3" stroke-width="1"/>
</g>
<g transform="translate(1217.7,189.9)" shape-rendering="geometricPrecision">
<circle r="5.5" fill="#fff"/>
<path d="M-4.2,4.2 A5.95,5.95 0 0 1 4.2,-4.2" fill="none" stroke="#8c8c8c" stroke-width="1.1"/>
<path d="M-3.5,3.5 A4.95,4.95 0 0 1 3.5,-3.5" fill="none" stroke="#696969" stroke-width="1"/>
<path d="M-4.2,4.2 A5.95,5.95 0 0 0 4.2,-4.2" fill="none" stroke="#fff" stroke-width="1.1"/>
<path d="M-3.5,3.5 A4.95,4.95 0 0 0 3.5,-3.5" fill="none" stroke="#E3E3E3" stroke-width="1"/>
<circle r="2" fill="#000"/>
</g>
<g shape-rendering="geometricPrecision">
<text x="1229.9" y="97.9" font-family="Liberation Sans, sans-serif" font-size="12.4" font-weight="bold" fill="#000" text-anchor="start" textLength="30.6" lengthAdjust="spacingAndGlyphs" xml:space="preserve" style="white-space:pre" stroke="#000" stroke-width="0.24">None</text>
<text x="1229.7" y="113.9" font-family="Liberation Sans, sans-serif" font-size="12.4" font-weight="bold" fill="#000" text-anchor="start" textLength="107.0" lengthAdjust="spacingAndGlyphs" xml:space="preserve" style="white-space:pre" stroke="#000" stroke-width="0.24">Analyzed Elements</text>
<text x="1229.5" y="129.9" font-family="Liberation Sans, sans-serif" font-size="12.4" font-weight="bold" fill="#000" text-anchor="start" textLength="70.4" lengthAdjust="spacingAndGlyphs" xml:space="preserve" style="white-space:pre" stroke="#000" stroke-width="0.24">All Elements</text>
<text x="1229.8" y="145.9" font-family="Liberation Sans, sans-serif" font-size="12.4" font-weight="bold" fill="#000" text-anchor="start" textLength="96.0" lengthAdjust="spacingAndGlyphs" xml:space="preserve" style="white-space:pre" stroke="#000" stroke-width="0.24">Specific Element</text>
<text x="1230.5" y="194" font-family="Liberation Sans, sans-serif" font-size="12.4" font-weight="bold" fill="#000" text-anchor="start" textLength="114.4" lengthAdjust="spacingAndGlyphs" xml:space="preserve" style="white-space:pre" stroke="#000" stroke-width="0.24">User Selected Lines</text>
</g>
<rect x="1323" y="88" width="13" height="13" fill="#FFFFFF" />
<rect x="1323" y="88" width="13" height="1" fill="#A0A0A0" />
<rect x="1323" y="88" width="1" height="13" fill="#A0A0A0" />
<rect x="1323" y="100" width="13" height="1" fill="#FFFFFF" />
<rect x="1335" y="88" width="1" height="13" fill="#FFFFFF" />
<rect x="1324" y="89" width="11" height="1" fill="#696969" />
<rect x="1324" y="89" width="1" height="11" fill="#696969" />
<rect x="1324" y="99" width="11" height="1" fill="#E3E3E3" />
<rect x="1334" y="89" width="1" height="11" fill="#E3E3E3" />
<rect x="1355" y="88" width="13" height="13" fill="#F0F0F0" />
<rect x="1355" y="88" width="13" height="1" fill="#A0A0A0" />
<rect x="1355" y="88" width="1" height="13" fill="#A0A0A0" />
<rect x="1355" y="100" width="13" height="1" fill="#FFFFFF" />
<rect x="1367" y="88" width="1" height="13" fill="#FFFFFF" />
<rect x="1356" y="89" width="11" height="1" fill="#696969" />
<rect x="1356" y="89" width="1" height="11" fill="#696969" />
<rect x="1356" y="99" width="11" height="1" fill="#E3E3E3" />
<rect x="1366" y="89" width="1" height="11" fill="#E3E3E3" />
<g shape-rendering="geometricPrecision">
<rect x="1315" y="118" width="57" height="17" fill="#C0C0FF" />
<rect x="1315" y="118" width="57" height="1" fill="#FFFFFF" />
<rect x="1315" y="118" width="1" height="17" fill="#FFFFFF" />
<rect x="1315" y="134" width="57" height="1" fill="#696969" />
<rect x="1371" y="118" width="1" height="17" fill="#696969" />
<rect x="1316" y="119" width="55" height="1" fill="#C0C0FF" />
<rect x="1316" y="119" width="1" height="15" fill="#C0C0FF" />
<rect x="1316" y="133" width="55" height="1" fill="#A0A0A0" />
<rect x="1370" y="119" width="1" height="15" fill="#A0A0A0" />
<text x="1343.5" y="131.0" font-family="Liberation Sans, sans-serif" font-size="12.4" font-weight="bold" fill="#000" text-anchor="middle" textLength="26.8" lengthAdjust="spacingAndGlyphs" xml:space="preserve" style="white-space:pre" stroke="#000" stroke-width="0.24">Help</text>
</g>
<rect x="1251" y="150" width="17" height="12" fill="#F0F0F0" />
<rect x="1251" y="150" width="17" height="1" fill="#FFFFFF" />
<rect x="1251" y="150" width="1" height="12" fill="#FFFFFF" />
<rect x="1251" y="161" width="17" height="1" fill="#696969" />
<rect x="1267" y="150" width="1" height="12" fill="#696969" />
<rect x="1252" y="151" width="15" height="1" fill="#E3E3E3" />
<rect x="1252" y="151" width="1" height="10" fill="#E3E3E3" />
<rect x="1252" y="160" width="15" height="1" fill="#A0A0A0" />
<rect x="1266" y="151" width="1" height="10" fill="#A0A0A0" />
<rect x="1251" y="163" width="17" height="12" fill="#F0F0F0" />
<rect x="1251" y="163" width="17" height="1" fill="#FFFFFF" />
<rect x="1251" y="163" width="1" height="12" fill="#FFFFFF" />
<rect x="1251" y="174" width="17" height="1" fill="#696969" />
<rect x="1267" y="163" width="1" height="12" fill="#696969" />
<rect x="1252" y="164" width="15" height="1" fill="#E3E3E3" />
<rect x="1252" y="164" width="1" height="10" fill="#E3E3E3" />
<rect x="1252" y="173" width="15" height="1" fill="#A0A0A0" />
<rect x="1266" y="164" width="1" height="10" fill="#A0A0A0" />
<rect x="1258" y="154" width="1" height="1" fill="#A0A0A0" />
<rect x="1257" y="155" width="3" height="1" fill="#A0A0A0" />
<rect x="1256" y="156" width="5" height="1" fill="#A0A0A0" />
<rect x="1256" y="167" width="5" height="1" fill="#A0A0A0" />
<rect x="1257" y="168" width="3" height="1" fill="#A0A0A0" />
<rect x="1258" y="169" width="1" height="1" fill="#A0A0A0" />
<rect x="1275" y="150" width="65" height="21" fill="#FFFFFF" />
<rect x="1275" y="150" width="65" height="1" fill="#A0A0A0" />
<rect x="1275" y="150" width="1" height="21" fill="#A0A0A0" />
<rect x="1275" y="170" width="65" height="1" fill="#FFFFFF" />
<rect x="1339" y="150" width="1" height="21" fill="#FFFFFF" />
<rect x="1276" y="151" width="63" height="1" fill="#696969" />
<rect x="1276" y="151" width="1" height="19" fill="#696969" />
<rect x="1276" y="169" width="63" height="1" fill="#E3E3E3" />
<rect x="1338" y="151" width="1" height="19" fill="#E3E3E3" />
<rect x="1321" y="152" width="17" height="17" fill="#F0F0F0" />
<rect x="1321" y="152" width="17" height="1" fill="#FFFFFF" />
<rect x="1321" y="152" width="1" height="17" fill="#FFFFFF" />
<rect x="1321" y="168" width="17" height="1" fill="#696969" />
<rect x="1337" y="152" width="1" height="17" fill="#696969" />
<rect x="1322" y="153" width="15" height="1" fill="#E3E3E3" />
<rect x="1322" y="153" width="1" height="15" fill="#E3E3E3" />
<rect x="1322" y="167" width="15" height="1" fill="#A0A0A0" />
<rect x="1336" y="153" width="1" height="15" fill="#A0A0A0" />
<rect x="1326" y="159" width="7" height="1" fill="#A0A0A0" />
<rect x="1327" y="160" width="5" height="1" fill="#A0A0A0" />
<rect x="1328" y="161" width="3" height="1" fill="#A0A0A0" />
<rect x="1329" y="162" width="1" height="1" fill="#A0A0A0" />
<g shape-rendering="geometricPrecision">
<text x="1279.2" y="164.1" font-family="Liberation Sans, sans-serif" font-size="12.4" fill="#808080" text-anchor="start" xml:space="preserve" style="white-space:pre" stroke="#808080" stroke-width="0.3">P</text>
</g>
<rect x="1229.5" y="182.5" width="116" height="15" fill="none" stroke="#000" stroke-width="1" stroke-dasharray="1 1"/>
<g shape-rendering="geometricPrecision">
<rect x="1211" y="198" width="161" height="17" fill="#F0F0F0" />
<rect x="1211" y="198" width="161" height="1" fill="#FFFFFF" />
<rect x="1211" y="198" width="1" height="17" fill="#FFFFFF" />
<rect x="1211" y="214" width="161" height="1" fill="#696969" />
<rect x="1371" y="198" width="1" height="17" fill="#696969" />
<rect x="1212" y="199" width="159" height="1" fill="#E3E3E3" />
<rect x="1212" y="199" width="1" height="15" fill="#E3E3E3" />
<rect x="1212" y="213" width="159" height="1" fill="#A0A0A0" />
<rect x="1370" y="199" width="1" height="15" fill="#A0A0A0" />
<text x="1291.5" y="209.8" font-family="Liberation Sans, sans-serif" font-size="12.4" fill="#000" text-anchor="middle" textLength="110.2" lengthAdjust="spacingAndGlyphs" xml:space="preserve" style="white-space:pre" stroke="#000" stroke-width="0.3">Choose Selected Lines</text>
<text x="1218.8" y="232.9" font-family="Liberation Sans, sans-serif" font-size="12.4" fill="#000" text-anchor="start" textLength="74.0" lengthAdjust="spacingAndGlyphs" xml:space="preserve" style="white-space:pre" stroke="#000" stroke-width="0.3">Maximum Order</text>
<text x="1317.0" y="232.9" font-family="Liberation Sans, sans-serif" font-size="12.4" fill="#000" text-anchor="start" textLength="36.9" lengthAdjust="spacingAndGlyphs" xml:space="preserve" style="white-space:pre" stroke="#000" stroke-width="0.3">Smooth</text>
</g>
<rect x="1219" y="238" width="72" height="21" fill="#FFFFFF" />
<rect x="1219" y="238" width="72" height="1" fill="#A0A0A0" />
<rect x="1219" y="238" width="1" height="21" fill="#A0A0A0" />
<rect x="1219" y="258" width="72" height="1" fill="#FFFFFF" />
<rect x="1290" y="238" width="1" height="21" fill="#FFFFFF" />
<rect x="1220" y="239" width="70" height="1" fill="#696969" />
<rect x="1220" y="239" width="1" height="19" fill="#696969" />
<rect x="1220" y="257" width="70" height="1" fill="#E3E3E3" />
<rect x="1289" y="239" width="1" height="19" fill="#E3E3E3" />
<rect x="1272" y="240" width="17" height="17" fill="#F0F0F0" />
<rect x="1272" y="240" width="17" height="1" fill="#FFFFFF" />
<rect x="1272" y="240" width="1" height="17" fill="#FFFFFF" />
<rect x="1272" y="256" width="17" height="1" fill="#696969" />
<rect x="1288" y="240" width="1" height="17" fill="#696969" />
<rect x="1273" y="241" width="15" height="1" fill="#E3E3E3" />
<rect x="1273" y="241" width="1" height="15" fill="#E3E3E3" />
<rect x="1273" y="255" width="15" height="1" fill="#A0A0A0" />
<rect x="1287" y="241" width="1" height="15" fill="#A0A0A0" />
<rect x="1278" y="247" width="7" height="1" fill="#000" />
<rect x="1279" y="248" width="5" height="1" fill="#000" />
<rect x="1280" y="249" width="3" height="1" fill="#000" />
<rect x="1281" y="250" width="1" height="1" fill="#000" />
<g shape-rendering="geometricPrecision">
<text x="1222.5" y="252.6" font-family="Liberation Sans, sans-serif" font-size="12.4" fill="#000" text-anchor="start" textLength="17.2" lengthAdjust="spacingAndGlyphs" xml:space="preserve" style="white-space:pre" stroke="#000" stroke-width="0.3">XX</text>
</g>
<rect x="1307" y="240" width="13" height="13" fill="#FFFFFF" />
<rect x="1307" y="240" width="13" height="1" fill="#A0A0A0" />
<rect x="1307" y="240" width="1" height="13" fill="#A0A0A0" />
<rect x="1307" y="252" width="13" height="1" fill="#FFFFFF" />
<rect x="1319" y="240" width="1" height="13" fill="#FFFFFF" />
<rect x="1308" y="241" width="11" height="1" fill="#696969" />
<rect x="1308" y="241" width="1" height="11" fill="#696969" />
<rect x="1308" y="251" width="11" height="1" fill="#E3E3E3" />
<rect x="1318" y="241" width="1" height="11" fill="#E3E3E3" />
<rect x="1323" y="238" width="40" height="21" fill="#FFFFFF" />
<rect x="1323" y="238" width="40" height="1" fill="#A0A0A0" />
<rect x="1323" y="238" width="1" height="21" fill="#A0A0A0" />
<rect x="1323" y="258" width="40" height="1" fill="#FFFFFF" />
<rect x="1362" y="238" width="1" height="21" fill="#FFFFFF" />
<rect x="1324" y="239" width="38" height="1" fill="#696969" />
<rect x="1324" y="239" width="1" height="19" fill="#696969" />
<rect x="1324" y="257" width="38" height="1" fill="#E3E3E3" />
<rect x="1361" y="239" width="1" height="19" fill="#E3E3E3" />
<rect x="1344" y="240" width="17" height="17" fill="#F0F0F0" />
<rect x="1344" y="240" width="17" height="1" fill="#FFFFFF" />
<rect x="1344" y="240" width="1" height="17" fill="#FFFFFF" />
<rect x="1344" y="256" width="17" height="1" fill="#696969" />
<rect x="1360" y="240" width="1" height="17" fill="#696969" />
<rect x="1345" y="241" width="15" height="1" fill="#E3E3E3" />
<rect x="1345" y="241" width="1" height="15" fill="#E3E3E3" />
<rect x="1345" y="255" width="15" height="1" fill="#A0A0A0" />
<rect x="1359" y="241" width="1" height="15" fill="#A0A0A0" />
<rect x="1350" y="247" width="7" height="1" fill="#A0A0A0" />
<rect x="1351" y="248" width="5" height="1" fill="#A0A0A0" />
<rect x="1352" y="249" width="3" height="1" fill="#A0A0A0" />
<rect x="1353" y="250" width="1" height="1" fill="#A0A0A0" />
<g shape-rendering="geometricPrecision">
<text x="1328" y="252.6" font-family="Liberation Sans, sans-serif" font-size="12.4" font-weight="bold" fill="#808080" text-anchor="start" xml:space="preserve" style="white-space:pre" stroke="#808080" stroke-width="0.24">4</text>
</g>
<rect x="1211" y="278" width="57" height="3" fill="#FF0000" />
<rect x="1211" y="294" width="57" height="3" fill="#00FF00" />
<rect x="1211" y="310" width="57" height="3" fill="#FF00FF" />
<g shape-rendering="geometricPrecision">
<text x="1327.3" y="280.6" font-family="Liberation Sans, sans-serif" font-size="12.4" fill="#000" text-anchor="middle" textLength="42.4" lengthAdjust="spacingAndGlyphs" xml:space="preserve" style="white-space:pre" stroke="#000" stroke-width="0.3">On-Peak</text>
<text x="1327.3" y="296.6" font-family="Liberation Sans, sans-serif" font-size="12.4" fill="#000" text-anchor="middle" textLength="80.6" lengthAdjust="spacingAndGlyphs" xml:space="preserve" style="white-space:pre" stroke="#000" stroke-width="0.3">Sample Off-Peak</text>
<text x="1327.7" y="312.6" font-family="Liberation Sans, sans-serif" font-size="12.4" fill="#000" text-anchor="middle" textLength="79.8" lengthAdjust="spacingAndGlyphs" xml:space="preserve" style="white-space:pre" stroke="#000" stroke-width="0.3">Current Off-Peak</text>
</g>
<rect x="1204" y="566" width="176" height="1" fill="#FFFFFF" />
<rect x="1204" y="566" width="1" height="218" fill="#FFFFFF" />
<rect x="1204" y="783" width="176" height="1" fill="#FFFFFF" />
<rect x="1379" y="566" width="1" height="218" fill="#FFFFFF" />
<rect x="1203" y="565" width="176" height="1" fill="#A0A0A0" />
<rect x="1203" y="565" width="1" height="218" fill="#A0A0A0" />
<rect x="1203" y="782" width="176" height="1" fill="#A0A0A0" />
<rect x="1378" y="565" width="1" height="218" fill="#A0A0A0" />
<rect x="1209.5" y="563" width="86.7" height="5" fill="#F0F0F0" />
<text x="1211.8" y="569.8" font-family="Liberation Sans, sans-serif" font-size="12.4" font-weight="bold" fill="#0000FF" text-anchor="start" textLength="81.9" lengthAdjust="spacingAndGlyphs" xml:space="preserve" style="white-space:pre" stroke="#0000FF" stroke-width="0.24">Graph Options</text>
<g shape-rendering="geometricPrecision">
<rect x="1211" y="575" width="161" height="17" fill="#F0F0F0" />
<rect x="1211" y="575" width="161" height="1" fill="#FFFFFF" />
<rect x="1211" y="575" width="1" height="17" fill="#FFFFFF" />
<rect x="1211" y="591" width="161" height="1" fill="#696969" />
<rect x="1371" y="575" width="1" height="17" fill="#696969" />
<rect x="1212" y="576" width="159" height="1" fill="#E3E3E3" />
<rect x="1212" y="576" width="1" height="15" fill="#E3E3E3" />
<rect x="1212" y="590" width="159" height="1" fill="#A0A0A0" />
<rect x="1370" y="576" width="1" height="15" fill="#A0A0A0" />
<text x="1291.5" y="587.8" font-family="Liberation Sans, sans-serif" font-size="12.4" font-weight="bold" fill="#000" text-anchor="middle" textLength="26.6" lengthAdjust="spacingAndGlyphs" xml:space="preserve" style="white-space:pre" stroke="#000" stroke-width="0.24">Print</text>
</g>
<rect x="1219" y="599" width="120" height="16" fill="#F0F0F0" />
<rect x="1219" y="599" width="120" height="1" fill="#A0A0A0" />
<rect x="1219" y="599" width="1" height="16" fill="#A0A0A0" />
<rect x="1219" y="614" width="120" height="1" fill="#FFFFFF" />
<rect x="1338" y="599" width="1" height="16" fill="#FFFFFF" />
<rect x="1220" y="600" width="118" height="1" fill="#696969" />
<rect x="1220" y="600" width="1" height="14" fill="#696969" />
<rect x="1220" y="613" width="118" height="1" fill="#E3E3E3" />
<rect x="1337" y="600" width="1" height="14" fill="#E3E3E3" />
<rect x="1347" y="601" width="13" height="13" fill="#FFFFFF" />
<rect x="1347" y="601" width="13" height="1" fill="#A0A0A0" />
<rect x="1347" y="601" width="1" height="13" fill="#A0A0A0" />
<rect x="1347" y="613" width="13" height="1" fill="#FFFFFF" />
<rect x="1359" y="601" width="1" height="13" fill="#FFFFFF" />
<rect x="1348" y="602" width="11" height="1" fill="#696969" />
<rect x="1348" y="602" width="1" height="11" fill="#696969" />
<rect x="1348" y="612" width="11" height="1" fill="#E3E3E3" />
<rect x="1358" y="602" width="1" height="11" fill="#E3E3E3" />
<rect x="1350" y="606" width="1" height="3" fill="#000" />
<rect x="1351" y="607" width="1" height="3" fill="#000" />
<rect x="1352" y="608" width="1" height="3" fill="#000" />
<rect x="1353" y="607" width="1" height="3" fill="#000" />
<rect x="1354" y="606" width="1" height="3" fill="#000" />
<rect x="1355" y="605" width="1" height="3" fill="#000" />
<rect x="1356" y="604" width="1" height="3" fill="#000" />
<g shape-rendering="geometricPrecision">
<text x="1223.8" y="611.2" font-family="Liberation Sans, sans-serif" font-size="12.4" fill="#000" text-anchor="start" textLength="85.2" lengthAdjust="spacingAndGlyphs" xml:space="preserve" style="white-space:pre" stroke="#000" stroke-width="0.3">1279.77  1.04646</text>
<rect x="1211" y="624" width="81" height="24" fill="#FFFF80" />
<rect x="1211" y="624" width="81" height="1" fill="#FFFFFF" />
<rect x="1211" y="624" width="1" height="24" fill="#FFFFFF" />
<rect x="1211" y="647" width="81" height="1" fill="#696969" />
<rect x="1291" y="624" width="1" height="24" fill="#696969" />
<rect x="1212" y="625" width="79" height="1" fill="#FFFF80" />
<rect x="1212" y="625" width="1" height="22" fill="#FFFF80" />
<rect x="1212" y="646" width="79" height="1" fill="#A0A0A0" />
<rect x="1290" y="625" width="1" height="22" fill="#A0A0A0" />
<text x="1251.5" y="640.3" font-family="Liberation Sans, sans-serif" font-size="12.4" font-weight="bold" fill="#000" text-anchor="middle" textLength="56.8" lengthAdjust="spacingAndGlyphs" xml:space="preserve" style="white-space:pre" stroke="#000" stroke-width="0.24">Zoom Full</text>
<rect x="1299" y="624" width="73" height="24" fill="#F0F0F0" />
<rect x="1299" y="624" width="73" height="1" fill="#FFFFFF" />
<rect x="1299" y="624" width="1" height="24" fill="#FFFFFF" />
<rect x="1299" y="647" width="73" height="1" fill="#696969" />
<rect x="1371" y="624" width="1" height="24" fill="#696969" />
<rect x="1300" y="625" width="71" height="1" fill="#E3E3E3" />
<rect x="1300" y="625" width="1" height="22" fill="#E3E3E3" />
<rect x="1300" y="646" width="71" height="1" fill="#A0A0A0" />
<rect x="1370" y="625" width="1" height="22" fill="#A0A0A0" />
<text x="1335.5" y="640.3" font-family="Liberation Sans, sans-serif" font-size="12.4" font-weight="bold" fill="#000" text-anchor="middle" textLength="55.0" lengthAdjust="spacingAndGlyphs" xml:space="preserve" style="white-space:pre" stroke="#000" stroke-width="0.24">ClipBoard</text>
<text x="1290.2" y="657.4" font-family="Liberation Sans, sans-serif" font-size="12.4" fill="#000" text-anchor="middle" textLength="131.9" lengthAdjust="spacingAndGlyphs" xml:space="preserve" style="white-space:pre" stroke="#000" stroke-width="0.3">Modify off-peak positions by</text>
<text x="1290.5" y="670.6" font-family="Liberation Sans, sans-serif" font-size="12.4" fill="#000" text-anchor="middle" textLength="150.9" lengthAdjust="spacingAndGlyphs" xml:space="preserve" style="white-space:pre" stroke="#000" stroke-width="0.3">clicking Low or High button and</text>
<text x="1292" y="683.6" font-family="Liberation Sans, sans-serif" font-size="12.4" fill="#000" text-anchor="middle" textLength="91.7" lengthAdjust="spacingAndGlyphs" xml:space="preserve" style="white-space:pre" stroke="#000" stroke-width="0.3">then click on graph</text>
<rect x="1211" y="688" width="73" height="15" fill="#FFFF80" />
<rect x="1211" y="688" width="73" height="1" fill="#FFFFFF" />
<rect x="1211" y="688" width="1" height="15" fill="#FFFFFF" />
<rect x="1211" y="702" width="73" height="1" fill="#696969" />
<rect x="1283" y="688" width="1" height="15" fill="#696969" />
<rect x="1212" y="689" width="71" height="1" fill="#FFFF80" />
<rect x="1212" y="689" width="1" height="13" fill="#FFFF80" />
<rect x="1212" y="701" width="71" height="1" fill="#A0A0A0" />
<rect x="1282" y="689" width="1" height="13" fill="#A0A0A0" />
<text x="1247.5" y="699.8" font-family="Liberation Sans, sans-serif" font-size="12.4" font-weight="bold" fill="#000" text-anchor="middle" textLength="23.8" lengthAdjust="spacingAndGlyphs" xml:space="preserve" style="white-space:pre" stroke="#000" stroke-width="0.24">Low</text>
<rect x="1300" y="688" width="72" height="15" fill="#FFFF80" />
<rect x="1300" y="688" width="72" height="1" fill="#FFFFFF" />
<rect x="1300" y="688" width="1" height="15" fill="#FFFFFF" />
<rect x="1300" y="702" width="72" height="1" fill="#696969" />
<rect x="1371" y="688" width="1" height="15" fill="#696969" />
<rect x="1301" y="689" width="70" height="1" fill="#FFFF80" />
<rect x="1301" y="689" width="1" height="13" fill="#FFFF80" />
<rect x="1301" y="701" width="70" height="1" fill="#A0A0A0" />
<rect x="1370" y="689" width="1" height="13" fill="#A0A0A0" />
<text x="1336.0" y="699.8" font-family="Liberation Sans, sans-serif" font-size="12.4" font-weight="bold" fill="#000" text-anchor="middle" textLength="26.4" lengthAdjust="spacingAndGlyphs" xml:space="preserve" style="white-space:pre" stroke="#000" stroke-width="0.24">High</text>
<rect x="1211" y="704" width="161" height="16" fill="#FFFF80" />
<rect x="1211" y="704" width="161" height="1" fill="#FFFFFF" />
<rect x="1211" y="704" width="1" height="16" fill="#FFFFFF" />
<rect x="1211" y="719" width="161" height="1" fill="#696969" />
<rect x="1371" y="704" width="1" height="16" fill="#696969" />
<rect x="1212" y="705" width="159" height="1" fill="#FFFF80" />
<rect x="1212" y="705" width="1" height="14" fill="#FFFF80" />
<rect x="1212" y="718" width="159" height="1" fill="#A0A0A0" />
<rect x="1370" y="705" width="1" height="14" fill="#A0A0A0" />
<text x="1291.5" y="716.3" font-family="Liberation Sans, sans-serif" font-size="12.4" font-weight="bold" fill="#000" text-anchor="middle" textLength="110.8" lengthAdjust="spacingAndGlyphs" xml:space="preserve" style="white-space:pre" stroke="#000" stroke-width="0.24">Model  Background</text>
<text x="1236.9" y="738.8" font-family="Liberation Sans, sans-serif" font-size="12.4" fill="#000" text-anchor="start" textLength="83.6" lengthAdjust="spacingAndGlyphs" xml:space="preserve" style="white-space:pre" stroke="#000" stroke-width="0.3">No Peak Markers</text>
<text x="1236.9" y="754.7" font-family="Liberation Sans, sans-serif" font-size="12.4" fill="#000" text-anchor="start" textLength="86.2" lengthAdjust="spacingAndGlyphs" xml:space="preserve" style="white-space:pre" stroke="#000" stroke-width="0.3">Show Date Stamp</text>
<text x="1236.9" y="770.6" font-family="Liberation Sans, sans-serif" font-size="12.4" fill="#000" text-anchor="start" textLength="77.6" lengthAdjust="spacingAndGlyphs" xml:space="preserve" style="white-space:pre" stroke="#000" stroke-width="0.3">Show Grid Lines</text>
</g>
<rect x="1219" y="729" width="13" height="13" fill="#FFFFFF" />
<rect x="1219" y="729" width="13" height="1" fill="#A0A0A0" />
<rect x="1219" y="729" width="1" height="13" fill="#A0A0A0" />
<rect x="1219" y="741" width="13" height="1" fill="#FFFFFF" />
<rect x="1231" y="729" width="1" height="13" fill="#FFFFFF" />
<rect x="1220" y="730" width="11" height="1" fill="#696969" />
<rect x="1220" y="730" width="1" height="11" fill="#696969" />
<rect x="1220" y="740" width="11" height="1" fill="#E3E3E3" />
<rect x="1230" y="730" width="1" height="11" fill="#E3E3E3" />
<rect x="1219" y="745" width="13" height="13" fill="#FFFFFF" />
<rect x="1219" y="745" width="13" height="1" fill="#A0A0A0" />
<rect x="1219" y="745" width="1" height="13" fill="#A0A0A0" />
<rect x="1219" y="757" width="13" height="1" fill="#FFFFFF" />
<rect x="1231" y="745" width="1" height="13" fill="#FFFFFF" />
<rect x="1220" y="746" width="11" height="1" fill="#696969" />
<rect x="1220" y="746" width="1" height="11" fill="#696969" />
<rect x="1220" y="756" width="11" height="1" fill="#E3E3E3" />
<rect x="1230" y="746" width="1" height="11" fill="#E3E3E3" />
<rect x="1219" y="761" width="13" height="13" fill="#FFFFFF" />
<rect x="1219" y="761" width="13" height="1" fill="#A0A0A0" />
<rect x="1219" y="761" width="1" height="13" fill="#A0A0A0" />
<rect x="1219" y="773" width="13" height="1" fill="#FFFFFF" />
<rect x="1231" y="761" width="1" height="13" fill="#FFFFFF" />
<rect x="1220" y="762" width="11" height="1" fill="#696969" />
<rect x="1220" y="762" width="1" height="11" fill="#696969" />
<rect x="1220" y="772" width="11" height="1" fill="#E3E3E3" />
<rect x="1230" y="762" width="1" height="11" fill="#E3E3E3" />
<rect x="1222" y="766" width="1" height="3" fill="#000" />
<rect x="1223" y="767" width="1" height="3" fill="#000" />
<rect x="1224" y="768" width="1" height="3" fill="#000" />
<rect x="1225" y="767" width="1" height="3" fill="#000" />
<rect x="1226" y="766" width="1" height="3" fill="#000" />
<rect x="1227" y="765" width="1" height="3" fill="#000" />
<rect x="1228" y="764" width="1" height="3" fill="#000" />
</g>
</svg>
</body></html>
